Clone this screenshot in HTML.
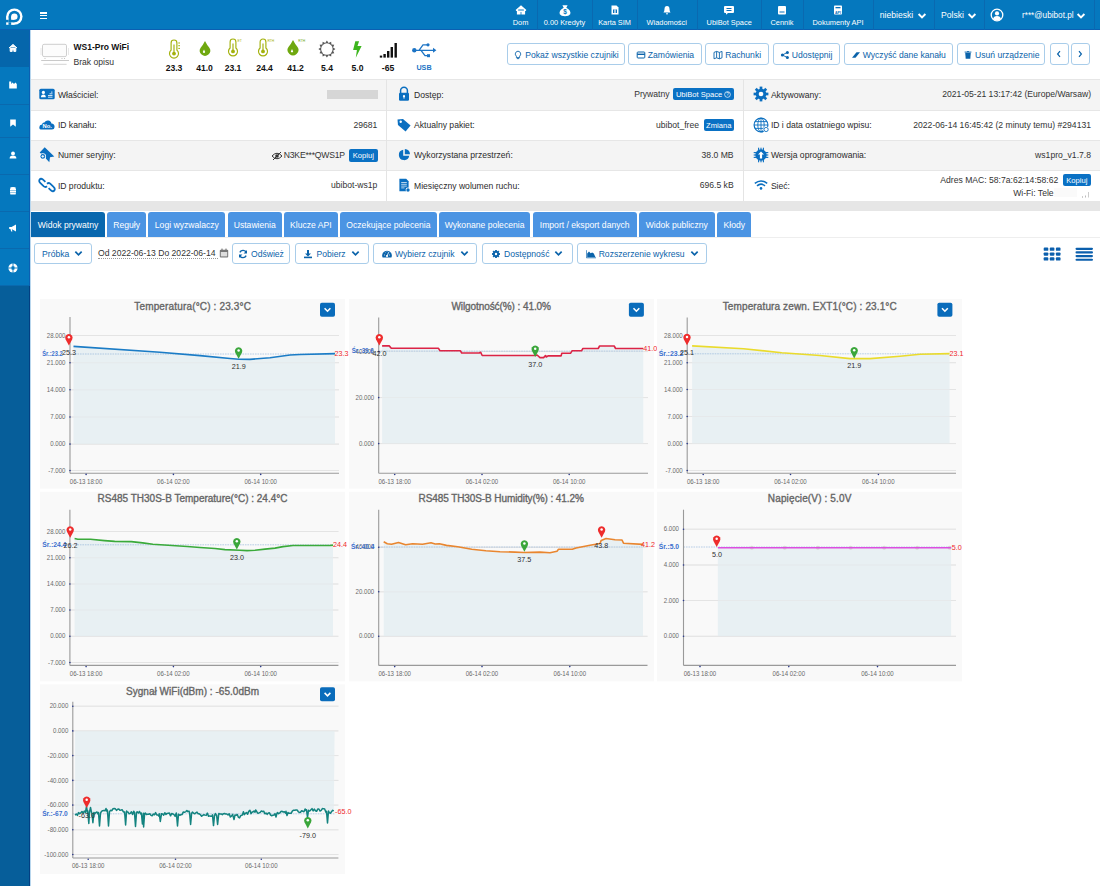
<!DOCTYPE html><html><head><meta charset="utf-8"><style>
*{margin:0;padding:0;box-sizing:border-box}
html,body{width:1100px;height:886px;overflow:hidden;background:#fff}
body{position:relative;font-family:"Liberation Sans",sans-serif}
.t{position:absolute;white-space:nowrap;line-height:1.2}
.a{position:absolute}
.btn{position:absolute;border:1px solid #a9cdea;border-radius:3px;background:#fff;color:#0b63aa;font-size:8.6px;white-space:nowrap;display:flex;align-items:center;justify-content:center}
.tab{position:absolute;top:212px;height:25px;background:#4b94e3;color:#fff;font-size:8.6px;border-radius:3px 3px 0 0;display:flex;align-items:center;justify-content:center;white-space:nowrap}
.kop{position:absolute;background:#0a71c4;color:#fff;border-radius:2px;font-size:7.6px;display:flex;align-items:center;justify-content:center;white-space:nowrap}
</style></head><body><div class="a" style="left:0;top:0;width:1100px;height:30px;background:#0578be"></div><div class="a" style="left:0;top:29px;width:1100px;height:1px;background:#0b5fb2"></div><svg class="a" style="left:0;top:0" width="30" height="30" viewBox="0 0 30 30">
<circle cx="14.35" cy="16.6" r="8.2" fill="#fff"/><rect x="6.15" y="16.6" width="8.2" height="8.2" fill="#fff"/>
<circle cx="14.35" cy="16.6" r="5.75" fill="#0578be"/><rect x="8.6" y="16.6" width="5.75" height="5.75" fill="#0578be"/>
<circle cx="14.35" cy="16.6" r="3.2" fill="#fff"/><rect x="11.15" y="16.6" width="3.2" height="3.2" fill="#fff"/>
<rect x="6" y="19.8" width="2.7" height="2.55" fill="#0578be"/><rect x="8.5" y="22.3" width="2.65" height="2.6" fill="#0578be"/>
</svg><div class="a" style="left:40px;top:12px;width:7px;height:1.6px;background:#fff"></div><div class="a" style="left:40px;top:14.8px;width:7px;height:1.6px;background:#fff"></div><div class="a" style="left:40px;top:17.6px;width:7px;height:1.6px;background:#fff"></div><div class="a" style="left:536.9px;top:0;width:1px;height:30px;background:#0a69b0"></div><div class="a" style="left:591.7px;top:0;width:1px;height:30px;background:#0a69b0"></div><div class="a" style="left:637.0px;top:0;width:1px;height:30px;background:#0a69b0"></div><div class="a" style="left:697.3px;top:0;width:1px;height:30px;background:#0a69b0"></div><div class="a" style="left:761.3px;top:0;width:1px;height:30px;background:#0a69b0"></div><div class="a" style="left:803.0px;top:0;width:1px;height:30px;background:#0a69b0"></div><div class="a" style="left:872.9px;top:0;width:1px;height:30px;background:#0a69b0"></div><div class="a" style="left:934.0px;top:0;width:1px;height:30px;background:#0a69b0"></div><div class="a" style="left:984.3px;top:0;width:1px;height:30px;background:#0a69b0"></div><div class="a" style="left:1094.1px;top:0;width:1px;height:30px;background:#0a69b0"></div><div class="t" style="left:320.5px;width:400px;text-align:center;top:19.16px;font-size:7.4px;color:#fff;font-weight:normal;">Dom</div><div class="t" style="left:364.5px;width:400px;text-align:center;top:19.16px;font-size:7.4px;color:#fff;font-weight:normal;">0.00 Kredyty</div><div class="t" style="left:414.6px;width:400px;text-align:center;top:19.16px;font-size:7.4px;color:#fff;font-weight:normal;">Karta SIM</div><div class="t" style="left:466.70000000000005px;width:400px;text-align:center;top:19.16px;font-size:7.4px;color:#fff;font-weight:normal;">Wiadomości</div><div class="t" style="left:529.2px;width:400px;text-align:center;top:19.16px;font-size:7.4px;color:#fff;font-weight:normal;">UbiBot Space</div><div class="t" style="left:582px;width:400px;text-align:center;top:19.16px;font-size:7.4px;color:#fff;font-weight:normal;">Cennik</div><div class="t" style="left:638px;width:400px;text-align:center;top:19.16px;font-size:7.4px;color:#fff;font-weight:normal;">Dokumenty API</div><svg class="a" style="left:513.5px;top:3px" width="14" height="14" viewBox="-7 -7 14 14"><path d="M-5 0.5 L0 -4 L5 0.5 M-3.5 -0.5 V4 H-1 V1.5 H1 V4 H3.5 V-0.5" fill="#fff" stroke="#fff" stroke-width="1.2"/></svg><svg class="a" style="left:557.5px;top:3px" width="14" height="14" viewBox="-7 -7 14 14"><g transform="scale(1.3) translate(0,0.3)"><path d="M-2 -4 H2 L1 -2 Q5 0 4 3 Q3 4.5 0 4.5 Q-3 4.5 -4 3 Q-5 0 -1 -2 Z" fill="#fff"/><text x="0" y="3" font-size="5" text-anchor="middle" fill="#0578be" font-family="Liberation Sans" font-weight="bold">$</text></g></svg><svg class="a" style="left:607.6px;top:3px" width="14" height="14" viewBox="-7 -7 14 14"><path d="M-3.5 -4.5 H1.5 L3.5 -2.5 V4.5 H-3.5 Z" fill="#fff"/><rect x="-2" y="-0.5" width="4" height="3.5" fill="#0a71bd"/><rect x="-0.6" y="-0.5" width="1.2" height="3.5" fill="#fff"/></svg><svg class="a" style="left:659.7px;top:3px" width="14" height="14" viewBox="-7 -7 14 14"><path d="M-3.5 2.5 Q-2.5 1 -2.5 -1 Q-2.5 -4 0 -4 Q2.5 -4 2.5 -1 Q2.5 1 3.5 2.5 Z M-1 3.3 H1 Q1 4.5 0 4.5 Q-1 4.5 -1 3.3" fill="#fff"/></svg><svg class="a" style="left:722.2px;top:3px" width="14" height="14" viewBox="-7 -7 14 14"><path d="M-4 -4 H4 Q5 -4 5 -3 V2 Q5 3 4 3 H-1 L-3 4.8 V3 H-4 Q-5 3 -5 2 V-3 Q-5 -4 -4 -4 Z" fill="#fff"/><rect x="-2.5" y="-2" width="5" height="1" fill="#0a71bd"/><rect x="-2.5" y="0" width="5" height="1" fill="#0a71bd"/></svg><svg class="a" style="left:775px;top:3px" width="14" height="14" viewBox="-7 -7 14 14"><rect x="-4" y="-4" width="8" height="8.5" rx="1" fill="#fff"/><rect x="-2.5" y="1" width="5" height="2" fill="#0a71bd" opacity="0.5"/></svg><svg class="a" style="left:831px;top:3px" width="14" height="14" viewBox="-7 -7 14 14"><rect x="-4" y="-4.5" width="8" height="9" rx="0.8" fill="#fff"/><rect x="-2.5" y="-3" width="5" height="1.3" fill="#0a71bd"/><text x="0" y="3.6" font-size="3.6" text-anchor="middle" fill="#0a71bd" font-family="Liberation Sans" font-weight="bold">API</text></svg><div class="t" style="left:879.8px;top:10.34px;font-size:8.6px;color:#fff;font-weight:normal;">niebieski</div><svg class="a" style="left:916.5px;top:11.6px" width="10.0" height="8.0" viewBox="0 0 10 8"><path d="M1.6 2 L5 5.4 L8.4 2" fill="none" stroke="#fff" stroke-width="1.9"/></svg><div class="t" style="left:941px;top:10.34px;font-size:8.6px;color:#fff;font-weight:normal;">Polski</div><svg class="a" style="left:967.0px;top:11.6px" width="10.0" height="8.0" viewBox="0 0 10 8"><path d="M1.6 2 L5 5.4 L8.4 2" fill="none" stroke="#fff" stroke-width="1.9"/></svg><svg class="a" style="left:990px;top:8px" width="14" height="14" viewBox="0 0 14 14"><circle cx="7" cy="7" r="5.8" fill="none" stroke="#fff" stroke-width="1.3"/><circle cx="7" cy="5.4" r="2.1" fill="#fff"/><path d="M3 10.9 Q3.6 8 7 8 Q10.4 8 11 10.9 Q9.4 12.5 7 12.5 Q4.6 12.5 3 10.9 Z" fill="#fff"/></svg><div class="t" style="left:1022px;top:10.58px;font-size:8.2px;color:#fff;font-weight:normal;">r***@ubibot.pl</div><svg class="a" style="left:1075.5px;top:11.6px" width="10.0" height="8.0" viewBox="0 0 10 8"><path d="M1.6 2 L5 5.4 L8.4 2" fill="none" stroke="#fff" stroke-width="1.9"/></svg><div class="a" style="left:0;top:30px;width:30px;height:856px;background:#0578be"></div><div class="a" style="left:29px;top:30px;width:1px;height:856px;background:#0b5fb2"></div><div class="a" style="left:30px;top:30px;width:1px;height:856px;background:#b9d7ee"></div><div class="a" style="left:0;top:30px;width:29px;height:37px;background:#0566ab"></div><div class="a" style="left:0;top:104px;width:29px;height:1px;background:#0a69ae"></div><div class="a" style="left:0;top:136.5px;width:29px;height:1px;background:#0a69ae"></div><div class="a" style="left:0;top:173.5px;width:29px;height:1px;background:#0a69ae"></div><div class="a" style="left:0;top:211px;width:29px;height:1px;background:#0a69ae"></div><div class="a" style="left:0;top:248px;width:29px;height:1px;background:#0a69ae"></div><div class="a" style="left:0;top:285px;width:29px;height:1px;background:#0a69ae"></div><div class="a" style="left:0;top:285.6px;width:29px;height:601px;background:#065e9a"></div><div class="a" style="left:29px;top:285.6px;width:1px;height:601px;background:#033f82"></div><svg class="a" style="left:6px;top:41px" width="14" height="14" viewBox="-7 -7 14 14"><path d="M-4 0 L0 -3.6 L4 0 M-2.8 -0.6 V3.4 H-0.8 V1.4 H0.8 V3.4 H2.8 V-0.6" fill="#fff" stroke="#fff" stroke-width="1"/></svg><svg class="a" style="left:6px;top:78.4px" width="14" height="14" viewBox="-7 -7 14 14"><path d="M-3.8 -3.6 V3.6 H3.8 V-1 L2.4 -2.4 L1 -1 L-0.4 -2.4 L-1.8 -1 V-3.6 Z" fill="#fff"/></svg><svg class="a" style="left:6px;top:116px" width="14" height="14" viewBox="-7 -7 14 14"><path d="M-2.8 -3.6 H2.8 V3.8 L0 1.6 L-2.8 3.8 Z" fill="#fff"/></svg><svg class="a" style="left:6px;top:147.5px" width="14" height="14" viewBox="-7 -7 14 14"><circle cx="0" cy="-1.6" r="1.9" fill="#fff"/><path d="M-3.4 3.6 Q-3.4 0.6 0 0.6 Q3.4 0.6 3.4 3.6 Z" fill="#fff"/></svg><svg class="a" style="left:6px;top:184px" width="14" height="14" viewBox="-7 -7 14 14"><ellipse cx="0" cy="-2.8" rx="3" ry="1.1" fill="#fff"/><rect x="-3" y="-2" width="6" height="1.6" fill="#fff"/><rect x="-3" y="0" width="6" height="1.6" fill="#fff"/><rect x="-3" y="2" width="6" height="1.6" rx="0.8" fill="#fff"/></svg><svg class="a" style="left:6px;top:221px" width="14" height="14" viewBox="-7 -7 14 14"><path d="M-3.8 -1 H-1.5 L3 -3.6 V3.6 L-1.5 1 H-3.8 Z M-2.6 1 L-1.8 3.6 H-0.6 L-1.2 1" fill="#fff"/></svg><svg class="a" style="left:6px;top:261px" width="14" height="14" viewBox="-7 -7 14 14"><circle cx="0" cy="0" r="4.6" fill="#fff"/><circle cx="0" cy="0" r="1.9" fill="#0578be"/><path d="M0 -4.8 V-2 M0 2 V4.8 M-4.8 0 H-2 M2 0 H4.8" stroke="#0578be" stroke-width="0.9"/></svg><svg class="a" style="left:38px;top:40px" width="36" height="28" viewBox="38 40 36 28">
<rect x="42.5" y="44.3" width="24" height="12.3" rx="1.5" fill="#fcfcfc" stroke="#c9c9c9" stroke-width="0.9"/>
<path d="M41 48 V55 M68.5 48 V55" stroke="#e2e2e2" stroke-width="0.8"/>
<line x1="41.2" y1="60.5" x2="69" y2="60.5" stroke="#c4c4c4" stroke-width="0.9"/>
<line x1="43.4" y1="64.3" x2="66.6" y2="64.3" stroke="#cfcfcf" stroke-width="0.9"/>
<circle cx="45" cy="58.5" r="0.6" fill="#bbb"/><circle cx="62" cy="58.5" r="0.6" fill="#bbb"/><circle cx="64.5" cy="58.5" r="0.6" fill="#bbb"/>
</svg><div class="t" style="left:73.5px;top:42.10px;font-size:8.5px;color:#111;font-weight:bold;">WS1-Pro WiFi</div><div class="t" style="left:73.5px;top:57.14px;font-size:8.6px;color:#333;font-weight:normal;">Brak opisu</div><svg class="a" style="left:161.6px;top:38.1px" width="30" height="22.299999999999997" viewBox="161.6 38.1 30 22.299999999999997"><path d="M170.7 50.26 V43.0 A2.9 2.9 0 0 1 176.5 43.0 V50.26 A4.5 4.5 0 1 1 170.7 50.26 Z" fill="#fff" stroke="#a3b10c" stroke-width="1.15"/><circle cx="173.6" cy="53.699999999999996" r="1.9" fill="#a3b10c"/><line x1="173.6" y1="44.7" x2="173.6" y2="53.699999999999996" stroke="#a3b10c" stroke-width="1.15"/><line x1="177.9" y1="43.1" x2="179.6" y2="43.1" stroke="#a3b10c" stroke-width="1"/><line x1="177.9" y1="45.8" x2="179.6" y2="45.8" stroke="#a3b10c" stroke-width="1"/><line x1="177.9" y1="48.5" x2="179.6" y2="48.5" stroke="#a3b10c" stroke-width="1"/></svg><svg class="a" style="left:194.7px;top:38.9px" width="24" height="18.700000000000003" viewBox="194.7 38.9 24 18.700000000000003"><path d="M204.7 40.9 Q207.09 45.65 209.05 47.55 A5.20 5.20 0 1 1 200.35 47.55 Q202.31 45.65 204.7 40.9 Z" fill="#6fa80f"/><path d="M203.7 49.5 L202.5 51.9 A1.25 1.25 0 0 0 204.89999999999998 51.9 Z" fill="#fff"/></svg><svg class="a" style="left:220.6px;top:37.1px" width="30" height="21.1" viewBox="220.6 37.1 30 21.1"><path d="M229.7 48.06 V42.0 A2.9 2.9 0 0 1 235.5 42.0 V48.06 A4.5 4.5 0 1 1 229.7 48.06 Z" fill="#fff" stroke="#a3b10c" stroke-width="1.15"/><circle cx="232.6" cy="51.5" r="1.9" fill="#a3b10c"/><line x1="232.6" y1="43.7" x2="232.6" y2="51.5" stroke="#a3b10c" stroke-width="1.15"/><text x="237.0" y="42.1" font-size="3.4" fill="#a3b10c" font-family="Liberation Sans">ET</text></svg><svg class="a" style="left:250.60000000000002px;top:37.1px" width="30" height="21.1" viewBox="250.60000000000002 37.1 30 21.1"><path d="M259.70000000000005 48.06 V42.0 A2.9 2.9 0 0 1 265.5 42.0 V48.06 A4.5 4.5 0 1 1 259.70000000000005 48.06 Z" fill="#fff" stroke="#a3b10c" stroke-width="1.15"/><circle cx="262.6" cy="51.5" r="1.9" fill="#a3b10c"/><line x1="262.6" y1="43.7" x2="262.6" y2="51.5" stroke="#a3b10c" stroke-width="1.15"/><text x="267.0" y="42.1" font-size="3.4" fill="#a3b10c" font-family="Liberation Sans">RTH</text></svg><svg class="a" style="left:283.2px;top:38.1px" width="24" height="19.299999999999997" viewBox="283.2 38.1 24 19.299999999999997"><path d="M293.2 40.1 Q295.69 45.04 297.73 47.03 A5.41 5.41 0 1 1 288.67 47.03 Q290.71 45.04 293.2 40.1 Z" fill="#6fa80f"/><path d="M292.2 49.087755102040816 L291.0 51.487755102040815 A1.25 1.25 0 0 0 293.4 51.487755102040815 Z" fill="#fff"/><text x="298.5" y="42.5" font-size="3.4" fill="#6fa80f" font-family="Liberation Sans">RTH</text></svg><svg class="a" style="left:316px;top:38px" width="22" height="22" viewBox="316 38 22 22"><polygon points="326.90,40.60 328.56,42.92 331.15,41.74 331.43,44.57 334.26,44.85 333.08,47.44 335.40,49.10 333.08,50.76 334.26,53.35 331.43,53.63 331.15,56.46 328.56,55.28 326.90,57.60 325.24,55.28 322.65,56.46 322.37,53.63 319.54,53.35 320.72,50.76 318.40,49.10 320.72,47.44 319.54,44.85 322.37,44.57 322.65,41.74 325.24,42.92" fill="#585858"/><circle cx="326.9" cy="49.1" r="5.75" fill="#fff"/></svg><svg class="a" style="left:350px;top:40px" width="14" height="19" viewBox="350 40 14 19"><polygon points="355.3,41.2 359.1,41.2 357.5,46.1 361.6,46.1 355.8,57.8 356.9,49.9 353.1,49.9" fill="#3db61e"/></svg><svg class="a" style="left:378px;top:42px" width="21" height="17" viewBox="378 42 21 17"><rect x="379.8" y="55.6" width="2.4" height="2.0" fill="#111"/><rect x="383.4" y="54" width="2.4" height="3.6000000000000014" fill="#111"/><rect x="387" y="51" width="2.4" height="6.600000000000001" fill="#111"/><rect x="390.6" y="47" width="2.4" height="10.600000000000001" fill="#111"/><rect x="394.5" y="43" width="2.4" height="14.600000000000001" fill="#111"/></svg><svg class="a" style="left:411px;top:41px" width="27" height="18" viewBox="411 41 27 18">
<circle cx="414.3" cy="50.3" r="2.2" fill="#1d74c5"/>
<path d="M414 50.3 H435 M419 50.3 L423 44.8 H427 M421 50.3 L425 55.6 H428" fill="none" stroke="#1d74c5" stroke-width="1.3"/>
<circle cx="428" cy="44.8" r="1.6" fill="#1d74c5"/><rect x="427" y="54.2" width="3" height="3" fill="#1d74c5"/>
<path d="M433 47.8 L436.4 50.3 L433 52.8 Z" fill="#1d74c5"/>
</svg><div class="t" style="left:-26px;width:400px;text-align:center;top:62.74px;font-size:8.6px;color:#111;font-weight:bold;">23.3</div><div class="t" style="left:4.5px;width:400px;text-align:center;top:62.74px;font-size:8.6px;color:#111;font-weight:bold;">41.0</div><div class="t" style="left:33px;width:400px;text-align:center;top:62.74px;font-size:8.6px;color:#111;font-weight:bold;">23.1</div><div class="t" style="left:64.5px;width:400px;text-align:center;top:62.74px;font-size:8.6px;color:#111;font-weight:bold;">24.4</div><div class="t" style="left:95.5px;width:400px;text-align:center;top:62.74px;font-size:8.6px;color:#111;font-weight:bold;">41.2</div><div class="t" style="left:127px;width:400px;text-align:center;top:62.74px;font-size:8.6px;color:#111;font-weight:bold;">5.4</div><div class="t" style="left:157.5px;width:400px;text-align:center;top:62.74px;font-size:8.6px;color:#111;font-weight:bold;">5.0</div><div class="t" style="left:188px;width:400px;text-align:center;top:62.74px;font-size:8.6px;color:#111;font-weight:bold;">-65</div><div class="t" style="left:224px;width:400px;text-align:center;top:64.28px;font-size:7.2px;color:#1d74c5;font-weight:bold;">USB</div><div class="btn" style="left:507.4px;top:43px;width:117.20000000000005px;height:22px;padding-top:1px"><svg width="10" height="10" viewBox="-5 -5 10 10" style="margin-right:2px"><path d="M0 -3.8 A2.8 2.8 0 0 1 1.6 1.2 V2.6 H-1.6 V1.2 A2.8 2.8 0 0 1 0 -3.8 Z" fill="none" stroke="#0b63aa" stroke-width="0.9"/><rect x="-1.2" y="3.2" width="2.4" height="0.9" fill="#0b63aa"/></svg>Pokaż wszystkie czujniki</div><div class="btn" style="left:628.2px;top:43px;width:73.59999999999991px;height:22px;padding-top:1px"><svg width="10" height="10" viewBox="-5 -5 10 10" style="margin-right:2px"><rect x="-3.8" y="-3" width="7.6" height="6" rx="0.8" fill="none" stroke="#0b63aa" stroke-width="1"/><rect x="-3.8" y="-1.4" width="7.6" height="1.4" fill="#0b63aa"/></svg>Zamówienia</div><div class="btn" style="left:705px;top:43px;width:64.39999999999998px;height:22px;padding-top:1px"><svg width="10" height="10" viewBox="-5 -5 10 10" style="margin-right:2px"><path d="M-4 -2.6 L-1.4 -3.6 L1.4 -2.6 L4 -3.6 V2.8 L1.4 3.8 L-1.4 2.8 L-4 3.8 Z M-1.4 -3.6 V2.8 M1.4 -2.6 V3.8" fill="none" stroke="#0b63aa" stroke-width="0.9"/></svg>Rachunki</div><div class="btn" style="left:772.7px;top:43px;width:66.89999999999998px;height:22px;padding-top:1px"><svg width="10" height="10" viewBox="-5 -5 10 10" style="margin-right:2px"><circle cx="2.4" cy="-2.6" r="1.5" fill="#0b63aa"/><circle cx="2.4" cy="2.6" r="1.5" fill="#0b63aa"/><circle cx="-2.6" cy="0" r="1.5" fill="#0b63aa"/><path d="M2.4 -2.6 L-2.6 0 L2.4 2.6" stroke="#0b63aa" stroke-width="0.9" fill="none"/></svg>Udostępnij</div><div class="btn" style="left:843.5px;top:43px;width:109.5px;height:22px;padding-top:1px"><svg width="10" height="10" viewBox="-5 -5 10 10" style="margin-right:2px"><path d="M-4 2.8 L0.5 -2.8 L4 -2.8 L-0.5 2.8 Z" fill="#0b63aa"/></svg>Wyczyść dane kanału</div><div class="btn" style="left:957px;top:43px;width:88.40000000000009px;height:22px;padding-top:1px"><svg width="10" height="10" viewBox="-5 -5 10 10" style="margin-right:2px"><path d="M-2.8 -2.2 H2.8 L2.3 3.8 H-2.3 Z" fill="#0b63aa"/><rect x="-3.4" y="-3.4" width="6.8" height="0.9" fill="#0b63aa"/><rect x="-1" y="-4" width="2" height="0.8" fill="#0b63aa"/></svg>Usuń urządzenie</div><div class="btn" style="left:1049.6px;top:43px;width:19px;height:22px"><svg width="6" height="8" viewBox="0 0 6 8"><path d="M4 1.2 L1.6 4 L4 6.8" fill="none" stroke="#0b63aa" stroke-width="1.2"/></svg></div><div class="btn" style="left:1071px;top:43px;width:18.5px;height:22px"><svg width="6" height="8" viewBox="0 0 6 8"><path d="M2 1.2 L4.4 4 L2 6.8" fill="none" stroke="#0b63aa" stroke-width="1.2"/></svg></div><div class="a" style="left:31px;top:79px;width:1069px;height:31px;background:#f4f4f4"></div><div class="a" style="left:31px;top:79px;width:1069px;height:1px;background:#e6e6e6"></div><div class="a" style="left:31px;top:110px;width:1069px;height:30px;background:#fff"></div><div class="a" style="left:31px;top:110px;width:1069px;height:1px;background:#e6e6e6"></div><div class="a" style="left:31px;top:140px;width:1069px;height:30px;background:#f4f4f4"></div><div class="a" style="left:31px;top:140px;width:1069px;height:1px;background:#e6e6e6"></div><div class="a" style="left:31px;top:170px;width:1069px;height:31px;background:#fff"></div><div class="a" style="left:31px;top:170px;width:1069px;height:1px;background:#e6e6e6"></div><div class="a" style="left:386px;top:79px;width:1px;height:122px;background:#e4e4e4"></div><div class="a" style="left:743px;top:79px;width:1px;height:122px;background:#e4e4e4"></div><div class="a" style="left:31px;top:201px;width:1069px;height:10px;background:#e6e6e6"></div><div class="a" style="left:31px;top:211px;width:1069px;height:26px;background:#fff"></div><div class="t" style="left:57.9px;top:89.54px;font-size:8.6px;color:#2b2b2b;font-weight:normal;">Właściciel:</div><div class="t" style="left:57.9px;top:120.14px;font-size:8.6px;color:#2b2b2b;font-weight:normal;">ID kanału:</div><div class="t" style="left:57.9px;top:150.44px;font-size:8.6px;color:#2b2b2b;font-weight:normal;">Numer seryjny:</div><div class="t" style="left:57.9px;top:180.94px;font-size:8.6px;color:#2b2b2b;font-weight:normal;">ID produktu:</div><div class="t" style="left:414px;top:89.54px;font-size:8.6px;color:#2b2b2b;font-weight:normal;">Dostęp:</div><div class="t" style="left:414px;top:120.14px;font-size:8.6px;color:#2b2b2b;font-weight:normal;">Aktualny pakiet:</div><div class="t" style="left:414px;top:150.44px;font-size:8.6px;color:#2b2b2b;font-weight:normal;">Wykorzystana przestrzeń:</div><div class="t" style="left:414px;top:180.94px;font-size:8.6px;color:#2b2b2b;font-weight:normal;">Miesięczny wolumen ruchu:</div><div class="t" style="left:770.9px;top:89.54px;font-size:8.6px;color:#2b2b2b;font-weight:normal;">Aktywowany:</div><div class="t" style="left:770.9px;top:120.14px;font-size:8.6px;color:#2b2b2b;font-weight:normal;">ID i data ostatniego wpisu:</div><div class="t" style="left:770.9px;top:150.44px;font-size:8.6px;color:#2b2b2b;font-weight:normal;">Wersja oprogramowania:</div><div class="t" style="left:770.9px;top:180.94px;font-size:8.6px;color:#2b2b2b;font-weight:normal;">Sieć:</div><svg class="a" style="left:38.3px;top:85.0px" width="18" height="18" viewBox="-9 -9 18 18"><rect x="-7.7" y="-5.3" width="15.4" height="10.6" rx="1.6" fill="#0b6fc0"/><circle cx="-3.6" cy="-1.6" r="1.6" fill="#fff"/><path d="M-6 3.2 Q-6 0.6 -3.6 0.6 Q-1.2 0.6 -1.2 3.2 Z" fill="#fff"/><path d="M1 3.2 H5.5 M1 1.5 H5.5 M2.5 -0.2 H5.5 M4 -1.9 H5.5" stroke="#fff" stroke-width="0.8"/></svg><svg class="a" style="left:38.3px;top:115.60000000000001px" width="18" height="18" viewBox="-9 -9 18 18"><path d="M-6.3 4.6 Q-7.8 4.6 -7.7 2.2 Q-7.6 -0.4 -5 -0.6 Q-4.6 -2.6 -2.6 -2.4 Q-1.4 -4.8 1.2 -4.6 Q4 -4.4 4.4 -1.4 Q7.6 -1 7.6 2 Q7.4 4.6 5 4.6 Z" fill="#0b6fc0"/><text x="0.2" y="3.4" font-size="5.8" text-anchor="middle" fill="#fff" font-family="Liberation Sans" font-weight="bold">No.</text></svg><svg class="a" style="left:38.3px;top:145.9px" width="18" height="18" viewBox="-9 -9 18 18"><path d="M-7.3 -2.6 L-2.3 -7.7 L7.3 1.4 L3 2.2 L2.3 7.3 L-3 1.4 Z" fill="#0b6fc0"/><circle cx="-4.2" cy="1.4" r="3.2" fill="#fff"/><circle cx="-4.2" cy="1.4" r="2.4" fill="#0b6fc0"/><path d="M-4.2 0 V2.8 M-5.6 1.4 H-2.8" stroke="#fff" stroke-width="0.9"/></svg><svg class="a" style="left:38.3px;top:176.4px" width="18" height="18" viewBox="-9 -9 18 18"><path d="M-1.6 -3.2 L-4.2 -5.6 Q-6.4 -7.2 -7.6 -5 Q-8.2 -3.4 -6.8 -2.2 L-3.2 1.4 Q-1.6 2.6 0 1.2 M1.6 3.2 L4.2 5.6 Q6.4 7.2 7.6 5 Q8.2 3.4 6.8 2.2 L3.2 -1.4 Q1.6 -2.6 0 -1.2" fill="none" stroke="#0b6fc0" stroke-width="1.8"/></svg><svg class="a" style="left:394.6px;top:85.0px" width="18" height="18" viewBox="-9 -9 18 18"><path d="M-3.4 -1 V-3.4 A3.4 3.4 0 0 1 3.4 -3.4 V-1" fill="none" stroke="#0b6fc0" stroke-width="1.5"/><rect x="-5" y="-1.2" width="10" height="8" rx="1.2" fill="#0b6fc0"/><circle cx="0" cy="2.2" r="1.1" fill="#fff"/><rect x="-0.5" y="2.2" width="1" height="2.4" fill="#fff"/></svg><svg class="a" style="left:394.6px;top:115.60000000000001px" width="18" height="18" viewBox="-9 -9 18 18"><path d="M-6 -6 H-0.5 L6.5 1 L1 6.5 L-6 -0.5 Z" fill="#0b6fc0" transform="rotate(-5)"/><circle cx="-3.3" cy="-3.3" r="1.2" fill="#fff"/></svg><svg class="a" style="left:394.6px;top:145.9px" width="18" height="18" viewBox="-9 -9 18 18"><path d="M-0.8 -5.2 A5.2 5.2 0 1 0 5.2 0.8 H-0.8 Z" fill="#0b6fc0"/><path d="M0.8 -6 A5.5 5.5 0 0 1 6 -0.8 H0.8 Z" fill="#0b6fc0"/></svg><svg class="a" style="left:394.6px;top:176.4px" width="18" height="18" viewBox="-9 -9 18 18"><path d="M-4.6 -6.2 H2.2 L4.6 -3.8 V6.2 H-4.6 Z" fill="#0b6fc0"/><path d="M-2.8 -2.5 H2.8 M-2.8 -0.7 H2.8 M-2.8 1.1 H2.8 M-2.8 2.9 H0.5" stroke="#fff" stroke-width="0.7"/><circle cx="4" cy="5" r="2.4" fill="#fff"/><circle cx="4" cy="5" r="1.7" fill="#0b6fc0"/></svg><svg class="a" style="left:751.5px;top:85.0px" width="18" height="18" viewBox="-9 -9 18 18"><circle cx="0" cy="0" r="5.3" fill="#0b6fc0"/><rect x="-1.35" y="-7.4" width="2.7" height="4" fill="#0b6fc0" transform="rotate(0)"/><rect x="-1.35" y="-7.4" width="2.7" height="4" fill="#0b6fc0" transform="rotate(45)"/><rect x="-1.35" y="-7.4" width="2.7" height="4" fill="#0b6fc0" transform="rotate(90)"/><rect x="-1.35" y="-7.4" width="2.7" height="4" fill="#0b6fc0" transform="rotate(135)"/><rect x="-1.35" y="-7.4" width="2.7" height="4" fill="#0b6fc0" transform="rotate(180)"/><rect x="-1.35" y="-7.4" width="2.7" height="4" fill="#0b6fc0" transform="rotate(225)"/><rect x="-1.35" y="-7.4" width="2.7" height="4" fill="#0b6fc0" transform="rotate(270)"/><rect x="-1.35" y="-7.4" width="2.7" height="4" fill="#0b6fc0" transform="rotate(315)"/><circle cx="0" cy="0" r="2.3" fill="#fff"/></svg><svg class="a" style="left:751.5px;top:115.60000000000001px" width="18" height="18" viewBox="-9 -9 18 18"><circle cx="0" cy="0" r="6.9" fill="none" stroke="#0b6fc0" stroke-width="1.2"/><ellipse cx="0" cy="0" rx="3.2" ry="6.9" fill="none" stroke="#0b6fc0" stroke-width="0.9"/><path d="M0 -6.9 V6.9 M-6.9 0 H6.9 M-6.1 -3.4 H6.1 M-6.1 3.4 H6.1" stroke="#0b6fc0" stroke-width="0.9"/><circle cx="5.1" cy="4.5" r="2.9" fill="#fff"/><circle cx="5.1" cy="4.5" r="2.1" fill="none" stroke="#0b6fc0" stroke-width="0.9"/></svg><svg class="a" style="left:751.5px;top:145.9px" width="18" height="18" viewBox="-9 -9 18 18"><circle cx="0" cy="0" r="5.7" fill="#0b6fc0"/><rect x="-2.95" y="-7.3" width="1.1" height="14.6" fill="#0b6fc0"/><rect x="-7.3" y="-2.95" width="14.6" height="1.1" fill="#0b6fc0"/><rect x="-0.55" y="-7.3" width="1.1" height="14.6" fill="#0b6fc0"/><rect x="-7.3" y="-0.55" width="14.6" height="1.1" fill="#0b6fc0"/><rect x="1.8499999999999999" y="-7.3" width="1.1" height="14.6" fill="#0b6fc0"/><rect x="-7.3" y="1.8499999999999999" width="14.6" height="1.1" fill="#0b6fc0"/><path d="M0 -3.6 L3 -0.4 H1.1 V3.4 H-1.1 V-0.4 H-3 Z" fill="#fff"/></svg><svg class="a" style="left:751.5px;top:176.4px" width="18" height="18" viewBox="-9 -9 18 18"><path d="M-6.2 -1.6 Q0 -6.6 6.2 -1.6" fill="none" stroke="#0b6fc0" stroke-width="1.5"/><path d="M-4 0.9 Q0 -2.6 4 0.9" fill="none" stroke="#0b6fc0" stroke-width="1.5"/><circle cx="0" cy="3.4" r="1.3" fill="#0b6fc0"/></svg><div class="a" style="left:327.3px;top:90.2px;width:51px;height:8.7px;background:#d6d6d6"></div><div class="t" style="right:722.7px;top:119.84px;font-size:8.6px;color:#333;font-weight:normal;">29681</div><svg class="a" style="left:270.5px;top:150.5px" width="12" height="10" viewBox="0 0 12 10"><path d="M1 5 Q6 -0.5 11 5 Q6 10.5 1 5 Z" fill="none" stroke="#333" stroke-width="1"/><circle cx="6" cy="5" r="1.8" fill="#333"/><line x1="2" y1="9" x2="10" y2="1" stroke="#333" stroke-width="1"/></svg><div class="t" style="right:755.1px;top:150.34px;font-size:8.6px;color:#333;font-weight:normal;letter-spacing:-0.2px">N3KE***QWS1P</div><div class="kop" style="left:349px;top:149px;width:28.6px;height:13.4px">Kopiuj</div><div class="t" style="right:722.7px;top:180.34px;font-size:8.6px;color:#333;font-weight:normal;">ubibot-ws1p</div><div class="t" style="right:430.5px;top:89.44px;font-size:8.6px;color:#333;font-weight:normal;">Prywatny</div><div class="kop" style="left:673.3px;top:88.4px;width:60.6px;height:11.8px">UbiBot Space <svg width="7" height="7" viewBox="0 0 8 8" style="margin-left:2px"><circle cx="4" cy="4" r="3.3" fill="none" stroke="#fff" stroke-width="0.8"/><text x="4" y="6.2" font-size="5.5" text-anchor="middle" fill="#fff" font-family="Liberation Sans">?</text></svg></div><div class="t" style="right:401px;top:119.84px;font-size:8.6px;color:#333;font-weight:normal;">ubibot_free</div><div class="kop" style="left:703.6px;top:119.4px;width:30.3px;height:11.7px">Zmiana</div><div class="t" style="right:366.4px;top:149.84px;font-size:8.6px;color:#333;font-weight:normal;">38.0 MB</div><div class="t" style="right:366.4px;top:180.34px;font-size:8.6px;color:#333;font-weight:normal;">696.5 kB</div><div class="t" style="right:9px;top:89.44px;font-size:8.6px;color:#333;font-weight:normal;">2021-05-21 13:17:42 (Europe/Warsaw)</div><div class="t" style="right:9px;top:119.84px;font-size:8.6px;color:#333;font-weight:normal;">2022-06-14 16:45:42 (2 minuty temu) #294131</div><div class="t" style="right:9px;top:149.84px;font-size:8.6px;color:#333;font-weight:normal;">ws1pro_v1.7.8</div><div class="t" style="right:41.700000000000045px;top:174.84px;font-size:8.6px;color:#333;font-weight:normal;">Adres MAC: 58:7a:62:14:58:62</div><div class="kop" style="left:1062.9px;top:174.2px;width:27.9px;height:11.8px">Kopiuj</div><div class="t" style="right:46.40000000000009px;top:187.64px;font-size:8.6px;color:#333;font-weight:normal;">Wi-Fi: Tele</div><div class="a" style="left:1054px;top:188px;width:23px;height:9px;background:#fafafa"></div><svg class="a" style="left:1081px;top:190px" width="10" height="8" viewBox="0 0 10 8"><rect x="1" y="6.5" width="1" height="1" fill="#999"/><rect x="4" y="5.5" width="1" height="2" fill="#bbb"/><rect x="7" y="2" width="1" height="5.5" fill="#ccc"/></svg><div class="a" style="left:31px;top:236.5px;width:1069px;height:1.5px;background:#eeeeee"></div><div class="tab" style="left:31px;width:74px;background:#0867ae;border-radius:0 3px 0 0;">Widok prywatny</div><div class="tab" style="left:107.3px;width:38.7px;background:#4b94e3;">Reguły</div><div class="tab" style="left:148.2px;width:77.30000000000001px;background:#4b94e3;">Logi wyzwalaczy</div><div class="tab" style="left:227.6px;width:54.29999999999998px;background:#4b94e3;">Ustawienia</div><div class="tab" style="left:284px;width:53.80000000000001px;background:#4b94e3;">Klucze API</div><div class="tab" style="left:340px;width:96.80000000000001px;background:#4b94e3;">Oczekujące polecenia</div><div class="tab" style="left:438.7px;width:91.80000000000001px;background:#4b94e3;">Wykonane polecenia</div><div class="tab" style="left:532.6px;width:104.19999999999993px;background:#4b94e3;">Import / eksport danych</div><div class="tab" style="left:639px;width:75.5px;background:#4b94e3;">Widok publiczny</div><div class="tab" style="left:717.3px;width:34.10000000000002px;background:#4b94e3;">Kłody</div><div class="btn" style="left:33.6px;top:243px;width:58.199999999999996px;height:21px">Próbka<svg width="9" height="7" viewBox="0 0 8 6" style="margin-left:5px"><path d="M1.2 1.4 L4 4.2 L6.8 1.4" fill="none" stroke="#0b63aa" stroke-width="1.5"/></svg></div><div class="btn" style="left:231.5px;top:243px;width:58.89999999999998px;height:21px"><svg width="10" height="10" viewBox="-5 -5 10 10" style="margin-right:3px"><path d="M3.4 -1.2 A3.6 3.6 0 0 0 -3.2 -1.6 M-3.4 1.2 A3.6 3.6 0 0 0 3.2 1.6" fill="none" stroke="#0b63aa" stroke-width="1.3"/><path d="M4 -4 V-0.6 H0.6 Z M-4 4 V0.6 H-0.6 Z" fill="#0b63aa"/></svg>Odśwież</div><div class="btn" style="left:294.5px;top:243px;width:74.10000000000002px;height:21px"><svg width="10" height="10" viewBox="-5 -5 10 10" style="margin-right:3px"><path d="M-1 -4 H1 V-0.5 H3 L0 2.5 L-3 -0.5 H-1 Z" fill="#0b63aa"/><rect x="-4" y="2.6" width="8" height="1.6" fill="#0b63aa"/></svg>Pobierz<svg width="9" height="7" viewBox="0 0 8 6" style="margin-left:5px"><path d="M1.2 1.4 L4 4.2 L6.8 1.4" fill="none" stroke="#0b63aa" stroke-width="1.5"/></svg></div><div class="btn" style="left:373.3px;top:243px;width:103.89999999999998px;height:21px"><svg width="10" height="10" viewBox="-5 -5 10 10" style="margin-right:3px"><path d="M-4.4 3.4 A4.8 4.8 0 1 1 4.4 3.4 Z" fill="#0b63aa"/><path d="M-3 0.8 L-2 1.2 M-2.2 -2 L-1.5 -1.3 M0 -3.2 V-2.4 M2.2 -2 L1.5 -1.3 M3 0.8 L2 1.2" stroke="#fff" stroke-width="0.7"/><circle cx="0" cy="2" r="1.1" fill="#fff"/><path d="M0 2 L1.6 -1.6" stroke="#fff" stroke-width="0.8"/></svg>Wybierz czujnik<svg width="9" height="7" viewBox="0 0 8 6" style="margin-left:5px"><path d="M1.2 1.4 L4 4.2 L6.8 1.4" fill="none" stroke="#0b63aa" stroke-width="1.5"/></svg></div><div class="btn" style="left:481.8px;top:243px;width:90.90000000000003px;height:21px"><svg width="10" height="10" viewBox="-5 -5 10 10" style="margin-right:3px"><circle cx="0" cy="0" r="3" fill="#0b63aa"/><rect x="-0.9" y="-4" width="1.8" height="2.2" fill="#0b63aa" transform="rotate(0)"/><rect x="-0.9" y="-4" width="1.8" height="2.2" fill="#0b63aa" transform="rotate(45)"/><rect x="-0.9" y="-4" width="1.8" height="2.2" fill="#0b63aa" transform="rotate(90)"/><rect x="-0.9" y="-4" width="1.8" height="2.2" fill="#0b63aa" transform="rotate(135)"/><rect x="-0.9" y="-4" width="1.8" height="2.2" fill="#0b63aa" transform="rotate(180)"/><rect x="-0.9" y="-4" width="1.8" height="2.2" fill="#0b63aa" transform="rotate(225)"/><rect x="-0.9" y="-4" width="1.8" height="2.2" fill="#0b63aa" transform="rotate(270)"/><rect x="-0.9" y="-4" width="1.8" height="2.2" fill="#0b63aa" transform="rotate(315)"/><circle cx="0" cy="0" r="1.2" fill="#fff"/></svg>Dostępność<svg width="9" height="7" viewBox="0 0 8 6" style="margin-left:5px"><path d="M1.2 1.4 L4 4.2 L6.8 1.4" fill="none" stroke="#0b63aa" stroke-width="1.5"/></svg></div><div class="btn" style="left:577.4px;top:243px;width:129.5px;height:21px"><svg width="10" height="10" viewBox="-5 -5 10 10" style="margin-right:3px"><path d="M-3.8 3.3 V-0.6 L-2 -2.6 L-0.4 -0.8 L1.2 -1.6 L2.8 -0.4 L4.5 3.3 Z" fill="#0b63aa"/><path d="M-4.6 -3.8 V3.8 H5" fill="none" stroke="#0b63aa" stroke-width="0.9" opacity="0.8"/></svg>Rozszerzenie wykresu<svg width="9" height="7" viewBox="0 0 8 6" style="margin-left:5px"><path d="M1.2 1.4 L4 4.2 L6.8 1.4" fill="none" stroke="#0b63aa" stroke-width="1.5"/></svg></div><div class="t" style="left:98px;top:248.04px;font-size:8.6px;color:#333;font-weight:normal;">Od 2022-06-13 Do 2022-06-14</div><div class="a" style="left:98px;top:257.8px;width:120px;height:0;border-top:1px dotted #999"></div><svg class="a" style="left:218.5px;top:247.5px" width="10" height="10" viewBox="0 0 10 10"><rect x="0.8" y="1.8" width="8.4" height="7.6" rx="1" fill="#777"/><rect x="1.8" y="4" width="6.4" height="4.4" fill="#ddd"/><rect x="2.4" y="0.6" width="1.2" height="2" fill="#777"/><rect x="6.4" y="0.6" width="1.2" height="2" fill="#777"/></svg><svg class="a" style="left:1043px;top:247px" width="19" height="15" viewBox="0 0 19 15"><rect x="0.7" y="0.5" width="4.6" height="3.3" rx="0.9" fill="#0b5fad"/><rect x="6.8" y="0.5" width="4.6" height="3.3" rx="0.9" fill="#0b5fad"/><rect x="12.899999999999999" y="0.5" width="4.6" height="3.3" rx="0.9" fill="#0b5fad"/><rect x="0.7" y="5.4" width="4.6" height="3.3" rx="0.9" fill="#0b5fad"/><rect x="6.8" y="5.4" width="4.6" height="3.3" rx="0.9" fill="#0b5fad"/><rect x="12.899999999999999" y="5.4" width="4.6" height="3.3" rx="0.9" fill="#0b5fad"/><rect x="0.7" y="10.3" width="4.6" height="3.3" rx="0.9" fill="#0b5fad"/><rect x="6.8" y="10.3" width="4.6" height="3.3" rx="0.9" fill="#0b5fad"/><rect x="12.899999999999999" y="10.3" width="4.6" height="3.3" rx="0.9" fill="#0b5fad"/></svg><svg class="a" style="left:1075px;top:247px" width="19" height="15" viewBox="0 0 19 15"><rect x="0.5" y="0.7" width="17.5" height="2.2" rx="1.1" fill="#0b5fad"/><rect x="0.5" y="4.35" width="17.5" height="2.2" rx="1.1" fill="#0b5fad"/><rect x="0.5" y="8.0" width="17.5" height="2.2" rx="1.1" fill="#0b5fad"/><rect x="0.5" y="11.649999999999999" width="17.5" height="2.2" rx="1.1" fill="#0b5fad"/></svg><svg style="position:absolute;left:0;top:0" width="1100" height="886" viewBox="0 0 1100 886"><rect x="40" y="299" width="305" height="189.6" fill="#f9f9f9"/><text x="192.6" y="306.4" font-family="Liberation Sans" font-size="10" font-weight="normal" fill="#666" stroke="#666" stroke-width="0.35" text-anchor="middle" dominant-baseline="central" textLength="116.6" lengthAdjust="spacing">Temperatura(°C) : 23.3°C</text><rect x="320" y="302.7" width="15" height="14" rx="1.8" fill="#0a6cbb"/><path d="M324.6 308.3 L327.5 311.2 L330.4 308.3" fill="none" stroke="#fff" stroke-width="1.6"/><line x1="70" y1="335.5" x2="339" y2="335.5" stroke="#e4e4e4" stroke-width="1"/><line x1="70" y1="362.7" x2="339" y2="362.7" stroke="#e4e4e4" stroke-width="1"/><line x1="70" y1="389.8" x2="339" y2="389.8" stroke="#e4e4e4" stroke-width="1"/><line x1="70" y1="417" x2="339" y2="417" stroke="#e4e4e4" stroke-width="1"/><line x1="70" y1="444.1" x2="339" y2="444.1" stroke="#e4e4e4" stroke-width="1"/><line x1="70" y1="470.5" x2="339" y2="470.5" stroke="#e4e4e4" stroke-width="1"/><polygon points="73.5,444.1 73.50,346.40 160.00,352.30 200.00,355.60 230.00,358.50 239.00,359.20 250.00,359.40 270.00,357.70 290.00,355.00 300.00,354.50 335.00,353.60 335,444.1" fill="#e8f0f3"/><line x1="70" y1="335.5" x2="339" y2="335.5" stroke="#e3e3e3" stroke-width="0.8" opacity="0.6"/><line x1="70" y1="362.7" x2="339" y2="362.7" stroke="#e3e3e3" stroke-width="0.8" opacity="0.6"/><line x1="70" y1="389.8" x2="339" y2="389.8" stroke="#e3e3e3" stroke-width="0.8" opacity="0.6"/><line x1="70" y1="417" x2="339" y2="417" stroke="#e3e3e3" stroke-width="0.8" opacity="0.6"/><line x1="70" y1="444.1" x2="339" y2="444.1" stroke="#e3e3e3" stroke-width="0.8" opacity="0.6"/><line x1="70" y1="470.5" x2="339" y2="470.5" stroke="#e3e3e3" stroke-width="0.8" opacity="0.6"/><line x1="70" y1="354" x2="335" y2="354" stroke="#86acd8" stroke-width="0.75" stroke-dasharray="1.6 0.9" opacity="0.75"/><line x1="70" y1="317" x2="70" y2="473.2" stroke="#9a9a9a" stroke-width="1.1"/><line x1="70" y1="473.2" x2="339" y2="473.2" stroke="#9a9a9a" stroke-width="1.1"/><circle cx="70" cy="335.5" r="0.8" fill="#2b3a8c"/><text x="65.5" y="335.1" font-family="Liberation Sans" font-size="6.9" fill="#6a6a6a" text-anchor="end" dominant-baseline="central" textLength="18.65" lengthAdjust="spacingAndGlyphs">28.000</text><circle cx="70" cy="362.7" r="0.8" fill="#2b3a8c"/><text x="65.5" y="362.3" font-family="Liberation Sans" font-size="6.9" fill="#6a6a6a" text-anchor="end" dominant-baseline="central" textLength="18.65" lengthAdjust="spacingAndGlyphs">21.000</text><circle cx="70" cy="389.8" r="0.8" fill="#2b3a8c"/><text x="65.5" y="389.40000000000003" font-family="Liberation Sans" font-size="6.9" fill="#6a6a6a" text-anchor="end" dominant-baseline="central" textLength="18.65" lengthAdjust="spacingAndGlyphs">14.000</text><circle cx="70" cy="417" r="0.8" fill="#2b3a8c"/><text x="65.5" y="416.6" font-family="Liberation Sans" font-size="6.9" fill="#6a6a6a" text-anchor="end" dominant-baseline="central" textLength="15.26" lengthAdjust="spacingAndGlyphs">7.000</text><circle cx="70" cy="444.1" r="0.8" fill="#2b3a8c"/><text x="65.5" y="443.70000000000005" font-family="Liberation Sans" font-size="6.9" fill="#6a6a6a" text-anchor="end" dominant-baseline="central" textLength="15.26" lengthAdjust="spacingAndGlyphs">0.000</text><circle cx="70" cy="470.5" r="0.8" fill="#2b3a8c"/><text x="65.5" y="470.1" font-family="Liberation Sans" font-size="6.9" fill="#6a6a6a" text-anchor="end" dominant-baseline="central" textLength="17.29" lengthAdjust="spacingAndGlyphs">-7.000</text><circle cx="86.1" cy="474.4" r="0.8" fill="#2b3a8c"/><text x="86.1" y="481.0" font-family="Liberation Sans" font-size="6.9" fill="#6a6a6a" text-anchor="middle" dominant-baseline="central" textLength="32.56" lengthAdjust="spacingAndGlyphs">06-13 18:00</text><circle cx="173.4" cy="474.4" r="0.8" fill="#2b3a8c"/><text x="173.4" y="481.0" font-family="Liberation Sans" font-size="6.9" fill="#6a6a6a" text-anchor="middle" dominant-baseline="central" textLength="32.56" lengthAdjust="spacingAndGlyphs">06-14 02:00</text><circle cx="260.7" cy="474.4" r="0.8" fill="#2b3a8c"/><text x="260.7" y="481.0" font-family="Liberation Sans" font-size="6.9" fill="#6a6a6a" text-anchor="middle" dominant-baseline="central" textLength="32.56" lengthAdjust="spacingAndGlyphs">06-14 10:00</text><polyline points="73.50,346.40 160.00,352.30 200.00,355.60 230.00,358.50 239.00,359.20 250.00,359.40 270.00,357.70 290.00,355.00 300.00,354.50 335.00,353.60" fill="none" stroke="#1b7cc6" stroke-width="1.6" stroke-linejoin="round"/><text x="62.7" y="353.4" font-family="Liberation Sans" font-size="7.4" font-weight="bold" fill="#3b6fce" text-anchor="end" dominant-baseline="central" textLength="20.4" lengthAdjust="spacingAndGlyphs">Śr.:23.2</text><path d="M68.9 345.5 L65.64 339.46 A3.7 3.7 0 1 1 72.16 339.46 Z" fill="#ee2c2c"/><circle cx="68.9" cy="337.30" r="1.25" fill="#fff"/><text x="69" y="352.7" font-family="Liberation Sans" font-size="7.2" fill="#2e2e2e" text-anchor="middle" dominant-baseline="central">25.3</text><path d="M238.6 358.8 L235.34 352.76 A3.7 3.7 0 1 1 241.86 352.76 Z" fill="#3aa63a"/><circle cx="238.6" cy="350.60" r="1.25" fill="#fff"/><text x="238.8" y="366" font-family="Liberation Sans" font-size="7.2" fill="#2e2e2e" text-anchor="middle" dominant-baseline="central">21.9</text><text x="334.5" y="353.2" font-family="Liberation Sans" font-size="7.2" fill="#f0262a" dominant-baseline="central">23.3</text><rect x="349" y="299" width="305" height="189.6" fill="#f9f9f9"/><text x="501.2" y="306.4" font-family="Liberation Sans" font-size="10" font-weight="normal" fill="#666" stroke="#666" stroke-width="0.35" text-anchor="middle" dominant-baseline="central" textLength="99.5" lengthAdjust="spacing">Wilgotność(%) : 41.0%</text><rect x="628.9" y="302.7" width="15" height="14" rx="1.8" fill="#0a6cbb"/><path d="M633.5 308.3 L636.4 311.2 L639.3 308.3" fill="none" stroke="#fff" stroke-width="1.6"/><line x1="378.7" y1="351.6" x2="648" y2="351.6" stroke="#e4e4e4" stroke-width="1"/><line x1="378.7" y1="397.6" x2="648" y2="397.6" stroke="#e4e4e4" stroke-width="1"/><line x1="378.7" y1="443.6" x2="648" y2="443.6" stroke="#e4e4e4" stroke-width="1"/><polygon points="382.1,443.6 382.10,345.90 389.20,345.90 391.30,348.30 438.50,348.30 439.90,350.70 460.30,350.70 461.70,353.00 479.30,353.00 480.70,352.30 482.20,355.50 535.60,355.50 537.10,355.00 540.00,357.60 543.60,357.60 545.50,355.50 546.30,357.00 548.00,355.90 561.10,355.90 561.80,353.30 570.50,353.30 572.00,350.80 581.50,350.80 582.90,348.50 598.20,348.50 599.60,346.00 614.20,346.00 615.60,348.50 643.30,348.50 643.3,443.6" fill="#e8f0f3"/><line x1="378.7" y1="351.6" x2="648" y2="351.6" stroke="#e3e3e3" stroke-width="0.8" opacity="0.6"/><line x1="378.7" y1="397.6" x2="648" y2="397.6" stroke="#e3e3e3" stroke-width="0.8" opacity="0.6"/><line x1="378.7" y1="443.6" x2="648" y2="443.6" stroke="#e3e3e3" stroke-width="0.8" opacity="0.6"/><line x1="378.7" y1="351.1" x2="643.3" y2="351.1" stroke="#86acd8" stroke-width="0.75" stroke-dasharray="1.6 0.9" opacity="0.75"/><line x1="378.7" y1="317.6" x2="378.7" y2="473.3" stroke="#9a9a9a" stroke-width="1.1"/><line x1="378.7" y1="473.3" x2="648" y2="473.3" stroke="#9a9a9a" stroke-width="1.1"/><circle cx="378.7" cy="351.6" r="0.8" fill="#2b3a8c"/><text x="374.2" y="351.20000000000005" font-family="Liberation Sans" font-size="6.9" fill="#6a6a6a" text-anchor="end" dominant-baseline="central" textLength="18.65" lengthAdjust="spacingAndGlyphs">40.000</text><circle cx="378.7" cy="397.6" r="0.8" fill="#2b3a8c"/><text x="374.2" y="397.20000000000005" font-family="Liberation Sans" font-size="6.9" fill="#6a6a6a" text-anchor="end" dominant-baseline="central" textLength="18.65" lengthAdjust="spacingAndGlyphs">20.000</text><circle cx="378.7" cy="443.6" r="0.8" fill="#2b3a8c"/><text x="374.2" y="443.20000000000005" font-family="Liberation Sans" font-size="6.9" fill="#6a6a6a" text-anchor="end" dominant-baseline="central" textLength="15.26" lengthAdjust="spacingAndGlyphs">0.000</text><circle cx="394.7" cy="474.5" r="0.8" fill="#2b3a8c"/><text x="394.7" y="481.2" font-family="Liberation Sans" font-size="6.9" fill="#6a6a6a" text-anchor="middle" dominant-baseline="central" textLength="32.56" lengthAdjust="spacingAndGlyphs">06-13 18:00</text><circle cx="482" cy="474.5" r="0.8" fill="#2b3a8c"/><text x="482" y="481.2" font-family="Liberation Sans" font-size="6.9" fill="#6a6a6a" text-anchor="middle" dominant-baseline="central" textLength="32.56" lengthAdjust="spacingAndGlyphs">06-14 02:00</text><circle cx="569.2" cy="474.5" r="0.8" fill="#2b3a8c"/><text x="569.2" y="481.2" font-family="Liberation Sans" font-size="6.9" fill="#6a6a6a" text-anchor="middle" dominant-baseline="central" textLength="32.56" lengthAdjust="spacingAndGlyphs">06-14 10:00</text><polyline points="382.10,345.90 389.20,345.90 391.30,348.30 438.50,348.30 439.90,350.70 460.30,350.70 461.70,353.00 479.30,353.00 480.70,352.30 482.20,355.50 535.60,355.50 537.10,355.00 540.00,357.60 543.60,357.60 545.50,355.50 546.30,357.00 548.00,355.90 561.10,355.90 561.80,353.30 570.50,353.30 572.00,350.80 581.50,350.80 582.90,348.50 598.20,348.50 599.60,346.00 614.20,346.00 615.60,348.50 643.30,348.50" fill="none" stroke="#dc2446" stroke-width="1.6" stroke-linejoin="round"/><text x="373.7" y="350.5" font-family="Liberation Sans" font-size="7.4" font-weight="bold" fill="#3b6fce" text-anchor="end" dominant-baseline="central" textLength="22" lengthAdjust="spacingAndGlyphs">Śr.:39.6</text><path d="M379.3 345.5 L376.04 339.46 A3.7 3.7 0 1 1 382.56 339.46 Z" fill="#ee2c2c"/><circle cx="379.3" cy="337.30" r="1.25" fill="#fff"/><text x="379.6" y="353" font-family="Liberation Sans" font-size="7.2" fill="#2e2e2e" text-anchor="middle" dominant-baseline="central">42.0</text><path d="M535.2 356.9 L531.94 350.86 A3.7 3.7 0 1 1 538.46 350.86 Z" fill="#3aa63a"/><circle cx="535.2" cy="348.70" r="1.25" fill="#fff"/><text x="535.3" y="364.2" font-family="Liberation Sans" font-size="7.2" fill="#2e2e2e" text-anchor="middle" dominant-baseline="central">37.0</text><text x="643.3" y="348.2" font-family="Liberation Sans" font-size="7.2" fill="#f0262a" dominant-baseline="central">41.0</text><rect x="657" y="299" width="305" height="189.6" fill="#f9f9f9"/><text x="809.7" y="306.4" font-family="Liberation Sans" font-size="10" font-weight="normal" fill="#666" stroke="#666" stroke-width="0.35" text-anchor="middle" dominant-baseline="central" textLength="174" lengthAdjust="spacing">Temperatura zewn. EXT1(°C) : 23.1°C</text><rect x="937.4" y="302.7" width="15" height="14" rx="1.8" fill="#0a6cbb"/><path d="M942.0 308.3 L944.9 311.2 L947.8 308.3" fill="none" stroke="#fff" stroke-width="1.6"/><line x1="687.2" y1="335.5" x2="956" y2="335.5" stroke="#e4e4e4" stroke-width="1"/><line x1="687.2" y1="362.7" x2="956" y2="362.7" stroke="#e4e4e4" stroke-width="1"/><line x1="687.2" y1="389.5" x2="956" y2="389.5" stroke="#e4e4e4" stroke-width="1"/><line x1="687.2" y1="416.5" x2="956" y2="416.5" stroke="#e4e4e4" stroke-width="1"/><line x1="687.2" y1="443.6" x2="956" y2="443.6" stroke="#e4e4e4" stroke-width="1"/><line x1="687.2" y1="470.5" x2="956" y2="470.5" stroke="#e4e4e4" stroke-width="1"/><polygon points="692.1,443.6 692.10,345.90 743.60,348.80 781.80,352.70 820.00,355.50 850.00,358.60 870.00,358.60 900.00,356.20 920.00,354.30 949.60,353.60 949.6,443.6" fill="#e8f0f3"/><line x1="687.2" y1="335.5" x2="956" y2="335.5" stroke="#e3e3e3" stroke-width="0.8" opacity="0.6"/><line x1="687.2" y1="362.7" x2="956" y2="362.7" stroke="#e3e3e3" stroke-width="0.8" opacity="0.6"/><line x1="687.2" y1="389.5" x2="956" y2="389.5" stroke="#e3e3e3" stroke-width="0.8" opacity="0.6"/><line x1="687.2" y1="416.5" x2="956" y2="416.5" stroke="#e3e3e3" stroke-width="0.8" opacity="0.6"/><line x1="687.2" y1="443.6" x2="956" y2="443.6" stroke="#e3e3e3" stroke-width="0.8" opacity="0.6"/><line x1="687.2" y1="470.5" x2="956" y2="470.5" stroke="#e3e3e3" stroke-width="0.8" opacity="0.6"/><line x1="687.2" y1="353.8" x2="949.6" y2="353.8" stroke="#86acd8" stroke-width="0.75" stroke-dasharray="1.6 0.9" opacity="0.75"/><line x1="687.2" y1="317.6" x2="687.2" y2="473.3" stroke="#9a9a9a" stroke-width="1.1"/><line x1="687.2" y1="473.3" x2="956" y2="473.3" stroke="#9a9a9a" stroke-width="1.1"/><circle cx="687.2" cy="335.5" r="0.8" fill="#2b3a8c"/><text x="682.7" y="335.1" font-family="Liberation Sans" font-size="6.9" fill="#6a6a6a" text-anchor="end" dominant-baseline="central" textLength="18.65" lengthAdjust="spacingAndGlyphs">28.000</text><circle cx="687.2" cy="362.7" r="0.8" fill="#2b3a8c"/><text x="682.7" y="362.3" font-family="Liberation Sans" font-size="6.9" fill="#6a6a6a" text-anchor="end" dominant-baseline="central" textLength="18.65" lengthAdjust="spacingAndGlyphs">21.000</text><circle cx="687.2" cy="389.5" r="0.8" fill="#2b3a8c"/><text x="682.7" y="389.1" font-family="Liberation Sans" font-size="6.9" fill="#6a6a6a" text-anchor="end" dominant-baseline="central" textLength="18.65" lengthAdjust="spacingAndGlyphs">14.000</text><circle cx="687.2" cy="416.5" r="0.8" fill="#2b3a8c"/><text x="682.7" y="416.1" font-family="Liberation Sans" font-size="6.9" fill="#6a6a6a" text-anchor="end" dominant-baseline="central" textLength="15.26" lengthAdjust="spacingAndGlyphs">7.000</text><circle cx="687.2" cy="443.6" r="0.8" fill="#2b3a8c"/><text x="682.7" y="443.20000000000005" font-family="Liberation Sans" font-size="6.9" fill="#6a6a6a" text-anchor="end" dominant-baseline="central" textLength="15.26" lengthAdjust="spacingAndGlyphs">0.000</text><circle cx="687.2" cy="470.5" r="0.8" fill="#2b3a8c"/><text x="682.7" y="470.1" font-family="Liberation Sans" font-size="6.9" fill="#6a6a6a" text-anchor="end" dominant-baseline="central" textLength="17.29" lengthAdjust="spacingAndGlyphs">-7.000</text><circle cx="703.2" cy="474.5" r="0.8" fill="#2b3a8c"/><text x="703.2" y="481.2" font-family="Liberation Sans" font-size="6.9" fill="#6a6a6a" text-anchor="middle" dominant-baseline="central" textLength="32.56" lengthAdjust="spacingAndGlyphs">06-13 18:00</text><circle cx="790.5" cy="474.5" r="0.8" fill="#2b3a8c"/><text x="790.5" y="481.2" font-family="Liberation Sans" font-size="6.9" fill="#6a6a6a" text-anchor="middle" dominant-baseline="central" textLength="32.56" lengthAdjust="spacingAndGlyphs">06-14 02:00</text><circle cx="878.4" cy="474.5" r="0.8" fill="#2b3a8c"/><text x="878.4" y="481.2" font-family="Liberation Sans" font-size="6.9" fill="#6a6a6a" text-anchor="middle" dominant-baseline="central" textLength="32.56" lengthAdjust="spacingAndGlyphs">06-14 10:00</text><polyline points="692.10,345.90 743.60,348.80 781.80,352.70 820.00,355.50 850.00,358.60 870.00,358.60 900.00,356.20 920.00,354.30 949.60,353.60" fill="none" stroke="#eadb2c" stroke-width="1.6" stroke-linejoin="round"/><text x="683.5" y="353.2" font-family="Liberation Sans" font-size="7.4" font-weight="bold" fill="#3b6fce" text-anchor="end" dominant-baseline="central" textLength="24.8" lengthAdjust="spacingAndGlyphs">Śr.:23.2</text><path d="M687 345.3 L683.74 339.26 A3.7 3.7 0 1 1 690.26 339.26 Z" fill="#ee2c2c"/><circle cx="687" cy="337.10" r="1.25" fill="#fff"/><text x="687" y="352.5" font-family="Liberation Sans" font-size="7.2" fill="#2e2e2e" text-anchor="middle" dominant-baseline="central">25.1</text><path d="M854.2 358.4 L850.94 352.36 A3.7 3.7 0 1 1 857.46 352.36 Z" fill="#3aa63a"/><circle cx="854.2" cy="350.20" r="1.25" fill="#fff"/><text x="854.2" y="365.6" font-family="Liberation Sans" font-size="7.2" fill="#2e2e2e" text-anchor="middle" dominant-baseline="central">21.9</text><text x="949.6" y="353.1" font-family="Liberation Sans" font-size="7.2" fill="#f0262a" dominant-baseline="central">23.1</text><rect x="40" y="491.8" width="305" height="189.6" fill="#f9f9f9"/><text x="192.5" y="498.9" font-family="Liberation Sans" font-size="10" font-weight="normal" fill="#666" stroke="#666" stroke-width="0.35" text-anchor="middle" dominant-baseline="central" textLength="190" lengthAdjust="spacing">RS485 TH30S-B Temperature(°C) : 24.4°C</text><line x1="69.9" y1="531.5" x2="338.4" y2="531.5" stroke="#e4e4e4" stroke-width="1"/><line x1="69.9" y1="557.7" x2="338.4" y2="557.7" stroke="#e4e4e4" stroke-width="1"/><line x1="69.9" y1="584" x2="338.4" y2="584" stroke="#e4e4e4" stroke-width="1"/><line x1="69.9" y1="610" x2="338.4" y2="610" stroke="#e4e4e4" stroke-width="1"/><line x1="69.9" y1="636.3" x2="338.4" y2="636.3" stroke="#e4e4e4" stroke-width="1"/><line x1="69.9" y1="662.5" x2="338.4" y2="662.5" stroke="#e4e4e4" stroke-width="1"/><polygon points="74.6,636.3 74.60,538.50 77.80,539.30 90.50,539.30 104.50,540.60 114.70,541.40 131.30,541.60 142.70,542.90 152.90,544.20 168.20,545.20 187.30,546.50 200.00,547.50 215.00,548.50 225.00,549.60 240.00,550.30 247.00,550.60 255.00,550.30 265.00,549.10 275.00,548.10 283.00,546.60 293.00,545.50 330.00,545.50 333.00,545.10 333,636.3" fill="#e8f0f3"/><line x1="69.9" y1="531.5" x2="338.4" y2="531.5" stroke="#e3e3e3" stroke-width="0.8" opacity="0.6"/><line x1="69.9" y1="557.7" x2="338.4" y2="557.7" stroke="#e3e3e3" stroke-width="0.8" opacity="0.6"/><line x1="69.9" y1="584" x2="338.4" y2="584" stroke="#e3e3e3" stroke-width="0.8" opacity="0.6"/><line x1="69.9" y1="610" x2="338.4" y2="610" stroke="#e3e3e3" stroke-width="0.8" opacity="0.6"/><line x1="69.9" y1="636.3" x2="338.4" y2="636.3" stroke="#e3e3e3" stroke-width="0.8" opacity="0.6"/><line x1="69.9" y1="662.5" x2="338.4" y2="662.5" stroke="#e3e3e3" stroke-width="0.8" opacity="0.6"/><line x1="69.9" y1="544.8" x2="332.5" y2="544.8" stroke="#86acd8" stroke-width="0.75" stroke-dasharray="1.6 0.9" opacity="0.75"/><line x1="69.9" y1="509.7" x2="69.9" y2="665.4" stroke="#9a9a9a" stroke-width="1.1"/><line x1="69.9" y1="665.4" x2="338.4" y2="665.4" stroke="#9a9a9a" stroke-width="1.1"/><circle cx="69.9" cy="531.5" r="0.8" fill="#2b3a8c"/><text x="65.4" y="531.1" font-family="Liberation Sans" font-size="6.9" fill="#6a6a6a" text-anchor="end" dominant-baseline="central" textLength="18.65" lengthAdjust="spacingAndGlyphs">28.000</text><circle cx="69.9" cy="557.7" r="0.8" fill="#2b3a8c"/><text x="65.4" y="557.3000000000001" font-family="Liberation Sans" font-size="6.9" fill="#6a6a6a" text-anchor="end" dominant-baseline="central" textLength="18.65" lengthAdjust="spacingAndGlyphs">21.000</text><circle cx="69.9" cy="584" r="0.8" fill="#2b3a8c"/><text x="65.4" y="583.6" font-family="Liberation Sans" font-size="6.9" fill="#6a6a6a" text-anchor="end" dominant-baseline="central" textLength="18.65" lengthAdjust="spacingAndGlyphs">14.000</text><circle cx="69.9" cy="610" r="0.8" fill="#2b3a8c"/><text x="65.4" y="609.6" font-family="Liberation Sans" font-size="6.9" fill="#6a6a6a" text-anchor="end" dominant-baseline="central" textLength="15.26" lengthAdjust="spacingAndGlyphs">7.000</text><circle cx="69.9" cy="636.3" r="0.8" fill="#2b3a8c"/><text x="65.4" y="635.9" font-family="Liberation Sans" font-size="6.9" fill="#6a6a6a" text-anchor="end" dominant-baseline="central" textLength="15.26" lengthAdjust="spacingAndGlyphs">0.000</text><circle cx="69.9" cy="662.5" r="0.8" fill="#2b3a8c"/><text x="65.4" y="662.1" font-family="Liberation Sans" font-size="6.9" fill="#6a6a6a" text-anchor="end" dominant-baseline="central" textLength="17.29" lengthAdjust="spacingAndGlyphs">-7.000</text><circle cx="86.1" cy="666.6" r="0.8" fill="#2b3a8c"/><text x="86.1" y="673.3000000000001" font-family="Liberation Sans" font-size="6.9" fill="#6a6a6a" text-anchor="middle" dominant-baseline="central" textLength="32.56" lengthAdjust="spacingAndGlyphs">06-13 18:00</text><circle cx="173.4" cy="666.6" r="0.8" fill="#2b3a8c"/><text x="173.4" y="673.3000000000001" font-family="Liberation Sans" font-size="6.9" fill="#6a6a6a" text-anchor="middle" dominant-baseline="central" textLength="32.56" lengthAdjust="spacingAndGlyphs">06-14 02:00</text><circle cx="260.7" cy="666.6" r="0.8" fill="#2b3a8c"/><text x="260.7" y="673.3000000000001" font-family="Liberation Sans" font-size="6.9" fill="#6a6a6a" text-anchor="middle" dominant-baseline="central" textLength="32.56" lengthAdjust="spacingAndGlyphs">06-14 10:00</text><polyline points="74.60,538.50 77.80,539.30 90.50,539.30 104.50,540.60 114.70,541.40 131.30,541.60 142.70,542.90 152.90,544.20 168.20,545.20 187.30,546.50 200.00,547.50 215.00,548.50 225.00,549.60 240.00,550.30 247.00,550.60 255.00,550.30 265.00,549.10 275.00,548.10 283.00,546.60 293.00,545.50 330.00,545.50 333.00,545.10" fill="none" stroke="#3aaa3a" stroke-width="1.6" stroke-linejoin="round"/><text x="66.4" y="544.1999999999999" font-family="Liberation Sans" font-size="7.4" font-weight="bold" fill="#3b6fce" text-anchor="end" dominant-baseline="central" textLength="24.2" lengthAdjust="spacingAndGlyphs">Śr.:24.4</text><path d="M70.2 537.8 L66.94 531.76 A3.7 3.7 0 1 1 73.46 531.76 Z" fill="#ee2c2c"/><circle cx="70.2" cy="529.60" r="1.25" fill="#fff"/><text x="70.4" y="545.5" font-family="Liberation Sans" font-size="7.2" fill="#2e2e2e" text-anchor="middle" dominant-baseline="central">26.2</text><path d="M236.8 549.5 L233.54 543.46 A3.7 3.7 0 1 1 240.06 543.46 Z" fill="#3aa63a"/><circle cx="236.8" cy="541.30" r="1.25" fill="#fff"/><text x="237.1" y="557" font-family="Liberation Sans" font-size="7.2" fill="#2e2e2e" text-anchor="middle" dominant-baseline="central">23.0</text><text x="333" y="544.5" font-family="Liberation Sans" font-size="7.2" fill="#f0262a" dominant-baseline="central">24.4</text><rect x="349" y="491.8" width="305" height="189.6" fill="#f9f9f9"/><text x="501.2" y="498.9" font-family="Liberation Sans" font-size="10" font-weight="normal" fill="#666" stroke="#666" stroke-width="0.35" text-anchor="middle" dominant-baseline="central" textLength="165.3" lengthAdjust="spacing">RS485 TH30S-B Humidity(%) : 41.2%</text><line x1="378.7" y1="547.3" x2="647.5" y2="547.3" stroke="#e4e4e4" stroke-width="1"/><line x1="378.7" y1="591.8" x2="647.5" y2="591.8" stroke="#e4e4e4" stroke-width="1"/><line x1="378.7" y1="636.3" x2="647.5" y2="636.3" stroke="#e4e4e4" stroke-width="1"/><polygon points="383.7,636.3 383.70,541.80 387.30,543.70 391.50,544.20 398.50,542.50 405.60,544.70 412.60,543.70 422.50,544.20 431.00,542.80 435.20,544.00 439.40,543.70 446.50,545.40 457.70,546.80 471.80,549.30 485.90,550.70 500.00,551.70 515.00,552.10 524.00,552.50 540.00,552.10 550.00,552.80 557.00,551.20 558.50,549.30 572.30,549.30 576.00,548.00 590.00,545.30 600.00,543.50 601.20,540.40 606.00,538.50 615.00,539.70 622.00,540.00 623.50,543.20 643.00,544.40 643,636.3" fill="#e8f0f3"/><line x1="378.7" y1="547.3" x2="647.5" y2="547.3" stroke="#e3e3e3" stroke-width="0.8" opacity="0.6"/><line x1="378.7" y1="591.8" x2="647.5" y2="591.8" stroke="#e3e3e3" stroke-width="0.8" opacity="0.6"/><line x1="378.7" y1="636.3" x2="647.5" y2="636.3" stroke="#e3e3e3" stroke-width="0.8" opacity="0.6"/><line x1="378.7" y1="547" x2="642.5" y2="547" stroke="#86acd8" stroke-width="0.75" stroke-dasharray="1.6 0.9" opacity="0.75"/><line x1="378.7" y1="509.7" x2="378.7" y2="665.4" stroke="#9a9a9a" stroke-width="1.1"/><line x1="378.7" y1="665.4" x2="647.5" y2="665.4" stroke="#9a9a9a" stroke-width="1.1"/><circle cx="378.7" cy="547.3" r="0.8" fill="#2b3a8c"/><text x="374.2" y="546.9" font-family="Liberation Sans" font-size="6.9" fill="#6a6a6a" text-anchor="end" dominant-baseline="central" textLength="18.65" lengthAdjust="spacingAndGlyphs">40.000</text><circle cx="378.7" cy="591.8" r="0.8" fill="#2b3a8c"/><text x="374.2" y="591.4" font-family="Liberation Sans" font-size="6.9" fill="#6a6a6a" text-anchor="end" dominant-baseline="central" textLength="18.65" lengthAdjust="spacingAndGlyphs">20.000</text><circle cx="378.7" cy="636.3" r="0.8" fill="#2b3a8c"/><text x="374.2" y="635.9" font-family="Liberation Sans" font-size="6.9" fill="#6a6a6a" text-anchor="end" dominant-baseline="central" textLength="15.26" lengthAdjust="spacingAndGlyphs">0.000</text><circle cx="394.7" cy="666.6" r="0.8" fill="#2b3a8c"/><text x="394.7" y="673.3000000000001" font-family="Liberation Sans" font-size="6.9" fill="#6a6a6a" text-anchor="middle" dominant-baseline="central" textLength="32.56" lengthAdjust="spacingAndGlyphs">06-13 18:00</text><circle cx="482" cy="666.6" r="0.8" fill="#2b3a8c"/><text x="482" y="673.3000000000001" font-family="Liberation Sans" font-size="6.9" fill="#6a6a6a" text-anchor="middle" dominant-baseline="central" textLength="32.56" lengthAdjust="spacingAndGlyphs">06-14 02:00</text><circle cx="569.8" cy="666.6" r="0.8" fill="#2b3a8c"/><text x="569.8" y="673.3000000000001" font-family="Liberation Sans" font-size="6.9" fill="#6a6a6a" text-anchor="middle" dominant-baseline="central" textLength="32.56" lengthAdjust="spacingAndGlyphs">06-14 10:00</text><polyline points="383.70,541.80 387.30,543.70 391.50,544.20 398.50,542.50 405.60,544.70 412.60,543.70 422.50,544.20 431.00,542.80 435.20,544.00 439.40,543.70 446.50,545.40 457.70,546.80 471.80,549.30 485.90,550.70 500.00,551.70 515.00,552.10 524.00,552.50 540.00,552.10 550.00,552.80 557.00,551.20 558.50,549.30 572.30,549.30 576.00,548.00 590.00,545.30 600.00,543.50 601.20,540.40 606.00,538.50 615.00,539.70 622.00,540.00 623.50,543.20 643.00,544.40" fill="none" stroke="#e9862f" stroke-width="1.6" stroke-linejoin="round"/><text x="374.3" y="546.4" font-family="Liberation Sans" font-size="7.4" font-weight="bold" fill="#3b6fce" text-anchor="end" dominant-baseline="central" textLength="23.3" lengthAdjust="spacingAndGlyphs">Śr.:40.4</text><path d="M601.6 537.8 L598.34 531.76 A3.7 3.7 0 1 1 604.86 531.76 Z" fill="#ee2c2c"/><circle cx="601.6" cy="529.60" r="1.25" fill="#fff"/><text x="601.2" y="545" font-family="Liberation Sans" font-size="7.2" fill="#2e2e2e" text-anchor="middle" dominant-baseline="central">43.8</text><path d="M524.4 551.7 L521.14 545.66 A3.7 3.7 0 1 1 527.66 545.66 Z" fill="#3aa63a"/><circle cx="524.4" cy="543.50" r="1.25" fill="#fff"/><text x="524.3" y="559.4" font-family="Liberation Sans" font-size="7.2" fill="#2e2e2e" text-anchor="middle" dominant-baseline="central">37.5</text><text x="641" y="544" font-family="Liberation Sans" font-size="7.2" fill="#f0262a" dominant-baseline="central">41.2</text><rect x="657" y="491.8" width="305" height="189.6" fill="#f9f9f9"/><text x="809.6" y="498.9" font-family="Liberation Sans" font-size="10" font-weight="normal" fill="#666" stroke="#666" stroke-width="0.35" text-anchor="middle" dominant-baseline="central" textLength="83.5" lengthAdjust="spacing">Napięcie(V) : 5.0V</text><line x1="683.5" y1="529.2" x2="956" y2="529.2" stroke="#e4e4e4" stroke-width="1"/><line x1="683.5" y1="565" x2="956" y2="565" stroke="#e4e4e4" stroke-width="1"/><line x1="683.5" y1="600.5" x2="956" y2="600.5" stroke="#e4e4e4" stroke-width="1"/><line x1="683.5" y1="636.3" x2="956" y2="636.3" stroke="#e4e4e4" stroke-width="1"/><polygon points="717.8,547 951.1,547 951.1,636.3 717.8,636.3" fill="#e8f0f3"/><line x1="683.5" y1="529.2" x2="956" y2="529.2" stroke="#e3e3e3" stroke-width="0.8" opacity="0.6"/><line x1="683.5" y1="565" x2="956" y2="565" stroke="#e3e3e3" stroke-width="0.8" opacity="0.6"/><line x1="683.5" y1="600.5" x2="956" y2="600.5" stroke="#e3e3e3" stroke-width="0.8" opacity="0.6"/><line x1="683.5" y1="636.3" x2="956" y2="636.3" stroke="#e3e3e3" stroke-width="0.8" opacity="0.6"/><line x1="683.5" y1="547" x2="951.1" y2="547" stroke="#86acd8" stroke-width="0.75" stroke-dasharray="1.6 0.9" opacity="0.75"/><line x1="683.5" y1="509.7" x2="683.5" y2="665.4" stroke="#9a9a9a" stroke-width="1.1"/><line x1="683.5" y1="665.4" x2="956" y2="665.4" stroke="#9a9a9a" stroke-width="1.1"/><circle cx="683.5" cy="529.2" r="0.8" fill="#2b3a8c"/><text x="679.0" y="528.8000000000001" font-family="Liberation Sans" font-size="6.9" fill="#6a6a6a" text-anchor="end" dominant-baseline="central" textLength="15.26" lengthAdjust="spacingAndGlyphs">6.000</text><circle cx="683.5" cy="565" r="0.8" fill="#2b3a8c"/><text x="679.0" y="564.6" font-family="Liberation Sans" font-size="6.9" fill="#6a6a6a" text-anchor="end" dominant-baseline="central" textLength="15.26" lengthAdjust="spacingAndGlyphs">4.000</text><circle cx="683.5" cy="600.5" r="0.8" fill="#2b3a8c"/><text x="679.0" y="600.1" font-family="Liberation Sans" font-size="6.9" fill="#6a6a6a" text-anchor="end" dominant-baseline="central" textLength="15.26" lengthAdjust="spacingAndGlyphs">2.000</text><circle cx="683.5" cy="636.3" r="0.8" fill="#2b3a8c"/><text x="679.0" y="635.9" font-family="Liberation Sans" font-size="6.9" fill="#6a6a6a" text-anchor="end" dominant-baseline="central" textLength="15.26" lengthAdjust="spacingAndGlyphs">0.000</text><circle cx="700" cy="666.6" r="0.8" fill="#2b3a8c"/><text x="700" y="673.3000000000001" font-family="Liberation Sans" font-size="6.9" fill="#6a6a6a" text-anchor="middle" dominant-baseline="central" textLength="32.56" lengthAdjust="spacingAndGlyphs">06-13 18:00</text><circle cx="788.8" cy="666.6" r="0.8" fill="#2b3a8c"/><text x="788.8" y="673.3000000000001" font-family="Liberation Sans" font-size="6.9" fill="#6a6a6a" text-anchor="middle" dominant-baseline="central" textLength="32.56" lengthAdjust="spacingAndGlyphs">06-14 02:00</text><circle cx="877.5" cy="666.6" r="0.8" fill="#2b3a8c"/><text x="877.5" y="673.3000000000001" font-family="Liberation Sans" font-size="6.9" fill="#6a6a6a" text-anchor="middle" dominant-baseline="central" textLength="32.56" lengthAdjust="spacingAndGlyphs">06-14 10:00</text><circle cx="751.8" cy="547.8" r="2" fill="#d4d4d4"/><circle cx="784.7" cy="547.8" r="2" fill="#d4d4d4"/><circle cx="817.9" cy="547.8" r="2" fill="#d4d4d4"/><circle cx="850.7" cy="547.8" r="2" fill="#d4d4d4"/><circle cx="884.2" cy="547.8" r="2" fill="#d4d4d4"/><circle cx="917.1" cy="547.8" r="2" fill="#d4d4d4"/><circle cx="949.6" cy="547.8" r="2" fill="#d4d4d4"/><polyline points="717.90,547.80 951.10,547.80" fill="none" stroke="#dd4fe0" stroke-width="1.6" stroke-linejoin="round"/><text x="679.1" y="546.4" font-family="Liberation Sans" font-size="7.4" font-weight="bold" fill="#3b6fce" text-anchor="end" dominant-baseline="central" textLength="20.4" lengthAdjust="spacingAndGlyphs">Śr.:5.0</text><path d="M716.7 547 L713.44 540.96 A3.7 3.7 0 1 1 719.96 540.96 Z" fill="#ee2c2c"/><circle cx="716.7" cy="538.80" r="1.25" fill="#fff"/><text x="716.9" y="554" font-family="Liberation Sans" font-size="7.2" fill="#2e2e2e" text-anchor="middle" dominant-baseline="central">5.0</text><text x="951.7" y="547" font-family="Liberation Sans" font-size="7.2" fill="#f0262a" dominant-baseline="central">5.0</text><rect x="40" y="684.4" width="305" height="189.6" fill="#f9f9f9"/><text x="192.5" y="691.2" font-family="Liberation Sans" font-size="10" font-weight="normal" fill="#666" stroke="#666" stroke-width="0.35" text-anchor="middle" dominant-baseline="central" textLength="133" lengthAdjust="spacing">Sygnał WiFi(dBm) : -65.0dBm</text><rect x="320" y="687.3" width="15" height="14" rx="1.8" fill="#0a6cbb"/><path d="M324.6 692.9 L327.5 695.8 L330.4 692.9" fill="none" stroke="#fff" stroke-width="1.6"/><line x1="72.8" y1="706.2" x2="338.4" y2="706.2" stroke="#e4e4e4" stroke-width="1"/><line x1="72.8" y1="730.9" x2="338.4" y2="730.9" stroke="#e4e4e4" stroke-width="1"/><line x1="72.8" y1="755.6" x2="338.4" y2="755.6" stroke="#e4e4e4" stroke-width="1"/><line x1="72.8" y1="780.4" x2="338.4" y2="780.4" stroke="#e4e4e4" stroke-width="1"/><line x1="72.8" y1="805.1" x2="338.4" y2="805.1" stroke="#e4e4e4" stroke-width="1"/><line x1="72.8" y1="829.8" x2="338.4" y2="829.8" stroke="#e4e4e4" stroke-width="1"/><line x1="72.8" y1="854.5" x2="338.4" y2="854.5" stroke="#e4e4e4" stroke-width="1"/><polygon points="75.1,730.9 75.10,815.28 76.25,814.05 77.40,815.37 78.55,812.60 79.70,813.79 80.85,812.86 82.00,811.52 83.15,813.06 84.30,811.10 85.45,812.43 85.50,812.25 86.50,806.50 87.50,812.55 87.75,810.78 87.80,811.59 88.80,823.50 89.50,812.11 90.50,807.50 91.50,812.48 91.90,812.90 92.90,822.70 93.90,812.38 94.65,813.93 95.80,812.58 96.95,811.95 98.10,814.21 98.50,812.52 99.50,826.00 100.50,813.17 101.55,811.44 102.70,810.70 103.85,810.41 105.00,810.87 106.00,808.50 107.00,811.60 107.30,810.07 107.50,810.98 108.50,826.00 109.50,811.68 109.60,811.43 110.75,810.22 111.90,810.70 113.05,808.66 114.20,808.46 115.35,808.82 116.50,810.44 117.65,809.28 118.80,808.99 119.95,810.31 121.10,810.10 122.25,809.80 123.40,811.97 124.55,811.89 124.60,811.92 125.60,825.00 126.60,810.94 126.85,812.00 128.00,812.10 129.15,813.71 130.30,813.39 131.45,811.80 132.60,814.52 133.75,811.33 134.50,812.52 135.50,826.50 136.50,812.58 137.20,811.72 138.35,813.08 139.50,811.46 140.65,813.94 141.40,813.04 142.40,824.00 143.40,813.30 143.60,827.00 144.60,813.66 145.25,812.94 146.40,814.47 147.55,814.17 148.70,814.21 149.85,813.82 151.00,815.33 152.15,815.78 153.30,814.03 154.45,814.80 155.60,812.55 156.75,815.04 157.90,814.88 159.05,816.24 159.30,813.82 160.30,821.50 161.30,815.07 161.35,813.64 162.50,814.07 163.65,815.19 164.80,812.78 165.95,814.49 167.10,813.42 168.25,813.27 169.40,813.10 170.55,815.84 171.70,813.46 172.85,813.95 174.00,814.55 175.15,816.37 176.30,813.08 176.50,814.14 177.50,826.00 178.50,814.31 178.60,814.29 179.75,815.27 180.90,814.74 182.05,814.62 183.20,812.11 184.35,812.34 185.50,811.84 185.90,811.62 186.90,810.50 187.90,811.67 188.95,811.05 189.60,812.83 190.60,824.40 191.60,813.34 192.40,812.03 193.55,813.20 194.70,813.82 195.85,812.80 197.00,812.04 198.15,813.84 199.30,813.87 200.45,814.77 201.60,816.28 202.75,815.32 203.90,814.69 205.05,815.12 206.20,815.38 207.35,813.05 208.50,816.30 209.65,815.89 210.80,816.28 211.95,816.03 212.50,814.82 213.50,825.60 214.50,815.62 215.40,813.51 216.55,815.57 216.60,815.11 217.60,824.40 218.60,815.15 218.85,813.51 220.00,814.09 221.15,813.96 222.30,814.68 223.45,813.64 224.60,813.48 225.75,814.10 226.90,813.96 228.05,815.00 229.20,813.76 230.35,817.04 231.50,816.09 232.65,814.37 233.00,815.80 234.00,819.50 235.00,814.99 236.10,815.33 237.25,814.46 238.40,817.26 239.55,817.86 240.70,815.59 241.85,815.20 242.40,815.08 243.40,811.70 244.40,814.65 245.30,813.28 246.45,812.53 247.60,814.21 248.75,811.21 249.90,810.23 251.05,813.66 252.20,812.00 253.00,811.90 254.00,811.00 255.00,812.22 255.65,809.92 256.80,811.77 257.95,813.42 259.10,812.93 260.25,812.31 261.40,810.94 262.55,811.63 263.70,811.16 264.85,813.75 266.00,813.12 267.15,814.35 268.30,812.93 269.45,812.81 270.60,815.15 271.75,815.76 272.90,815.19 274.05,814.96 275.00,813.60 276.00,817.00 277.00,813.19 277.50,812.59 278.65,813.63 279.80,812.96 280.95,811.52 282.10,811.29 283.25,812.01 284.40,811.70 285.55,813.12 286.00,811.31 287.00,815.50 288.00,812.58 289.00,813.36 290.15,813.35 291.30,813.16 292.45,810.86 293.60,810.26 294.75,810.22 295.90,810.05 297.05,810.02 298.20,811.56 299.35,812.55 300.50,812.24 301.65,810.76 302.80,811.30 303.95,811.74 305.10,808.91 306.25,810.99 306.50,809.73 307.50,817.50 308.50,810.21 308.55,811.22 309.70,810.98 310.85,809.86 312.00,808.64 313.15,810.88 314.30,809.06 315.45,810.76 316.60,811.33 317.75,809.06 318.90,809.00 320.05,811.01 321.20,810.42 322.35,808.56 323.50,808.65 324.65,809.00 325.80,812.11 326.50,811.31 327.50,823.00 328.50,811.04 329.25,812.58 330.40,813.24 331.55,811.75 332.70,810.33 333.85,810.83 334.6,730.9" fill="#e8f0f3"/><line x1="72.8" y1="706.2" x2="338.4" y2="706.2" stroke="#e3e3e3" stroke-width="0.8" opacity="0.6"/><line x1="72.8" y1="730.9" x2="338.4" y2="730.9" stroke="#e3e3e3" stroke-width="0.8" opacity="0.6"/><line x1="72.8" y1="755.6" x2="338.4" y2="755.6" stroke="#e3e3e3" stroke-width="0.8" opacity="0.6"/><line x1="72.8" y1="780.4" x2="338.4" y2="780.4" stroke="#e3e3e3" stroke-width="0.8" opacity="0.6"/><line x1="72.8" y1="805.1" x2="338.4" y2="805.1" stroke="#e3e3e3" stroke-width="0.8" opacity="0.6"/><line x1="72.8" y1="829.8" x2="338.4" y2="829.8" stroke="#e3e3e3" stroke-width="0.8" opacity="0.6"/><line x1="72.8" y1="854.5" x2="338.4" y2="854.5" stroke="#e3e3e3" stroke-width="0.8" opacity="0.6"/><line x1="72.8" y1="813.8" x2="334.5" y2="813.8" stroke="#86acd8" stroke-width="0.75" stroke-dasharray="1.6 0.9" opacity="0.75"/><line x1="72.8" y1="701.8" x2="72.8" y2="858" stroke="#9a9a9a" stroke-width="1.1"/><line x1="72.8" y1="858" x2="338.4" y2="858" stroke="#9a9a9a" stroke-width="1.1"/><circle cx="72.8" cy="706.2" r="0.8" fill="#2b3a8c"/><text x="68.3" y="705.8000000000001" font-family="Liberation Sans" font-size="6.9" fill="#6a6a6a" text-anchor="end" dominant-baseline="central" textLength="18.65" lengthAdjust="spacingAndGlyphs">20.000</text><circle cx="72.8" cy="730.9" r="0.8" fill="#2b3a8c"/><text x="68.3" y="730.5" font-family="Liberation Sans" font-size="6.9" fill="#6a6a6a" text-anchor="end" dominant-baseline="central" textLength="15.26" lengthAdjust="spacingAndGlyphs">0.000</text><circle cx="72.8" cy="755.6" r="0.8" fill="#2b3a8c"/><text x="68.3" y="755.2" font-family="Liberation Sans" font-size="6.9" fill="#6a6a6a" text-anchor="end" dominant-baseline="central" textLength="20.69" lengthAdjust="spacingAndGlyphs">-20.000</text><circle cx="72.8" cy="780.4" r="0.8" fill="#2b3a8c"/><text x="68.3" y="780.0" font-family="Liberation Sans" font-size="6.9" fill="#6a6a6a" text-anchor="end" dominant-baseline="central" textLength="20.69" lengthAdjust="spacingAndGlyphs">-40.000</text><circle cx="72.8" cy="805.1" r="0.8" fill="#2b3a8c"/><text x="68.3" y="804.7" font-family="Liberation Sans" font-size="6.9" fill="#6a6a6a" text-anchor="end" dominant-baseline="central" textLength="20.69" lengthAdjust="spacingAndGlyphs">-60.000</text><circle cx="72.8" cy="829.8" r="0.8" fill="#2b3a8c"/><text x="68.3" y="829.4" font-family="Liberation Sans" font-size="6.9" fill="#6a6a6a" text-anchor="end" dominant-baseline="central" textLength="20.69" lengthAdjust="spacingAndGlyphs">-80.000</text><circle cx="72.8" cy="854.5" r="0.8" fill="#2b3a8c"/><text x="68.3" y="854.1" font-family="Liberation Sans" font-size="6.9" fill="#6a6a6a" text-anchor="end" dominant-baseline="central" textLength="24.08" lengthAdjust="spacingAndGlyphs">-100.000</text><circle cx="88.2" cy="859.2" r="0.8" fill="#2b3a8c"/><text x="88.2" y="865.4000000000001" font-family="Liberation Sans" font-size="6.9" fill="#6a6a6a" text-anchor="middle" dominant-baseline="central" textLength="32.56" lengthAdjust="spacingAndGlyphs">06-13 18:00</text><circle cx="175.5" cy="859.2" r="0.8" fill="#2b3a8c"/><text x="175.5" y="865.4000000000001" font-family="Liberation Sans" font-size="6.9" fill="#6a6a6a" text-anchor="middle" dominant-baseline="central" textLength="32.56" lengthAdjust="spacingAndGlyphs">06-14 02:00</text><circle cx="261.3" cy="859.2" r="0.8" fill="#2b3a8c"/><text x="261.3" y="865.4000000000001" font-family="Liberation Sans" font-size="6.9" fill="#6a6a6a" text-anchor="middle" dominant-baseline="central" textLength="32.56" lengthAdjust="spacingAndGlyphs">06-14 10:00</text><polyline points="75.10,815.28 76.25,814.05 77.40,815.37 78.55,812.60 79.70,813.79 80.85,812.86 82.00,811.52 83.15,813.06 84.30,811.10 85.45,812.43 85.50,812.25 86.50,806.50 87.50,812.55 87.75,810.78 87.80,811.59 88.80,823.50 89.50,812.11 90.50,807.50 91.50,812.48 91.90,812.90 92.90,822.70 93.90,812.38 94.65,813.93 95.80,812.58 96.95,811.95 98.10,814.21 98.50,812.52 99.50,826.00 100.50,813.17 101.55,811.44 102.70,810.70 103.85,810.41 105.00,810.87 106.00,808.50 107.00,811.60 107.30,810.07 107.50,810.98 108.50,826.00 109.50,811.68 109.60,811.43 110.75,810.22 111.90,810.70 113.05,808.66 114.20,808.46 115.35,808.82 116.50,810.44 117.65,809.28 118.80,808.99 119.95,810.31 121.10,810.10 122.25,809.80 123.40,811.97 124.55,811.89 124.60,811.92 125.60,825.00 126.60,810.94 126.85,812.00 128.00,812.10 129.15,813.71 130.30,813.39 131.45,811.80 132.60,814.52 133.75,811.33 134.50,812.52 135.50,826.50 136.50,812.58 137.20,811.72 138.35,813.08 139.50,811.46 140.65,813.94 141.40,813.04 142.40,824.00 143.40,813.30 143.60,827.00 144.60,813.66 145.25,812.94 146.40,814.47 147.55,814.17 148.70,814.21 149.85,813.82 151.00,815.33 152.15,815.78 153.30,814.03 154.45,814.80 155.60,812.55 156.75,815.04 157.90,814.88 159.05,816.24 159.30,813.82 160.30,821.50 161.30,815.07 161.35,813.64 162.50,814.07 163.65,815.19 164.80,812.78 165.95,814.49 167.10,813.42 168.25,813.27 169.40,813.10 170.55,815.84 171.70,813.46 172.85,813.95 174.00,814.55 175.15,816.37 176.30,813.08 176.50,814.14 177.50,826.00 178.50,814.31 178.60,814.29 179.75,815.27 180.90,814.74 182.05,814.62 183.20,812.11 184.35,812.34 185.50,811.84 185.90,811.62 186.90,810.50 187.90,811.67 188.95,811.05 189.60,812.83 190.60,824.40 191.60,813.34 192.40,812.03 193.55,813.20 194.70,813.82 195.85,812.80 197.00,812.04 198.15,813.84 199.30,813.87 200.45,814.77 201.60,816.28 202.75,815.32 203.90,814.69 205.05,815.12 206.20,815.38 207.35,813.05 208.50,816.30 209.65,815.89 210.80,816.28 211.95,816.03 212.50,814.82 213.50,825.60 214.50,815.62 215.40,813.51 216.55,815.57 216.60,815.11 217.60,824.40 218.60,815.15 218.85,813.51 220.00,814.09 221.15,813.96 222.30,814.68 223.45,813.64 224.60,813.48 225.75,814.10 226.90,813.96 228.05,815.00 229.20,813.76 230.35,817.04 231.50,816.09 232.65,814.37 233.00,815.80 234.00,819.50 235.00,814.99 236.10,815.33 237.25,814.46 238.40,817.26 239.55,817.86 240.70,815.59 241.85,815.20 242.40,815.08 243.40,811.70 244.40,814.65 245.30,813.28 246.45,812.53 247.60,814.21 248.75,811.21 249.90,810.23 251.05,813.66 252.20,812.00 253.00,811.90 254.00,811.00 255.00,812.22 255.65,809.92 256.80,811.77 257.95,813.42 259.10,812.93 260.25,812.31 261.40,810.94 262.55,811.63 263.70,811.16 264.85,813.75 266.00,813.12 267.15,814.35 268.30,812.93 269.45,812.81 270.60,815.15 271.75,815.76 272.90,815.19 274.05,814.96 275.00,813.60 276.00,817.00 277.00,813.19 277.50,812.59 278.65,813.63 279.80,812.96 280.95,811.52 282.10,811.29 283.25,812.01 284.40,811.70 285.55,813.12 286.00,811.31 287.00,815.50 288.00,812.58 289.00,813.36 290.15,813.35 291.30,813.16 292.45,810.86 293.60,810.26 294.75,810.22 295.90,810.05 297.05,810.02 298.20,811.56 299.35,812.55 300.50,812.24 301.65,810.76 302.80,811.30 303.95,811.74 305.10,808.91 306.25,810.99 306.50,809.73 307.50,817.50 308.50,810.21 308.55,811.22 309.70,810.98 310.85,809.86 312.00,808.64 313.15,810.88 314.30,809.06 315.45,810.76 316.60,811.33 317.75,809.06 318.90,809.00 320.05,811.01 321.20,810.42 322.35,808.56 323.50,808.65 324.65,809.00 325.80,812.11 326.50,811.31 327.50,823.00 328.50,811.04 329.25,812.58 330.40,813.24 331.55,811.75 332.70,810.33 333.85,810.83" fill="none" stroke="#13837f" stroke-width="1.5" stroke-linejoin="round"/><text x="67.8" y="813.1999999999999" font-family="Liberation Sans" font-size="7.4" font-weight="bold" fill="#3b6fce" text-anchor="end" dominant-baseline="central" textLength="25.6" lengthAdjust="spacingAndGlyphs">Śr.:-67.0</text><path d="M86.7 808 L83.44 801.96 A3.7 3.7 0 1 1 89.96 801.96 Z" fill="#ee2c2c"/><circle cx="86.7" cy="799.80" r="1.25" fill="#fff"/><text x="86.7" y="815.9" font-family="Liberation Sans" font-size="7.2" fill="#2e2e2e" text-anchor="middle" dominant-baseline="central">-63.0</text><path d="M307.8 828.4 L304.54 822.36 A3.7 3.7 0 1 1 311.06 822.36 Z" fill="#3aa63a"/><circle cx="307.8" cy="820.20" r="1.25" fill="#fff"/><text x="307.8" y="835.6" font-family="Liberation Sans" font-size="7.2" fill="#2e2e2e" text-anchor="middle" dominant-baseline="central">-79.0</text><text x="335" y="811" font-family="Liberation Sans" font-size="7.2" fill="#f0262a" dominant-baseline="central">-65.0</text></svg></body></html>
